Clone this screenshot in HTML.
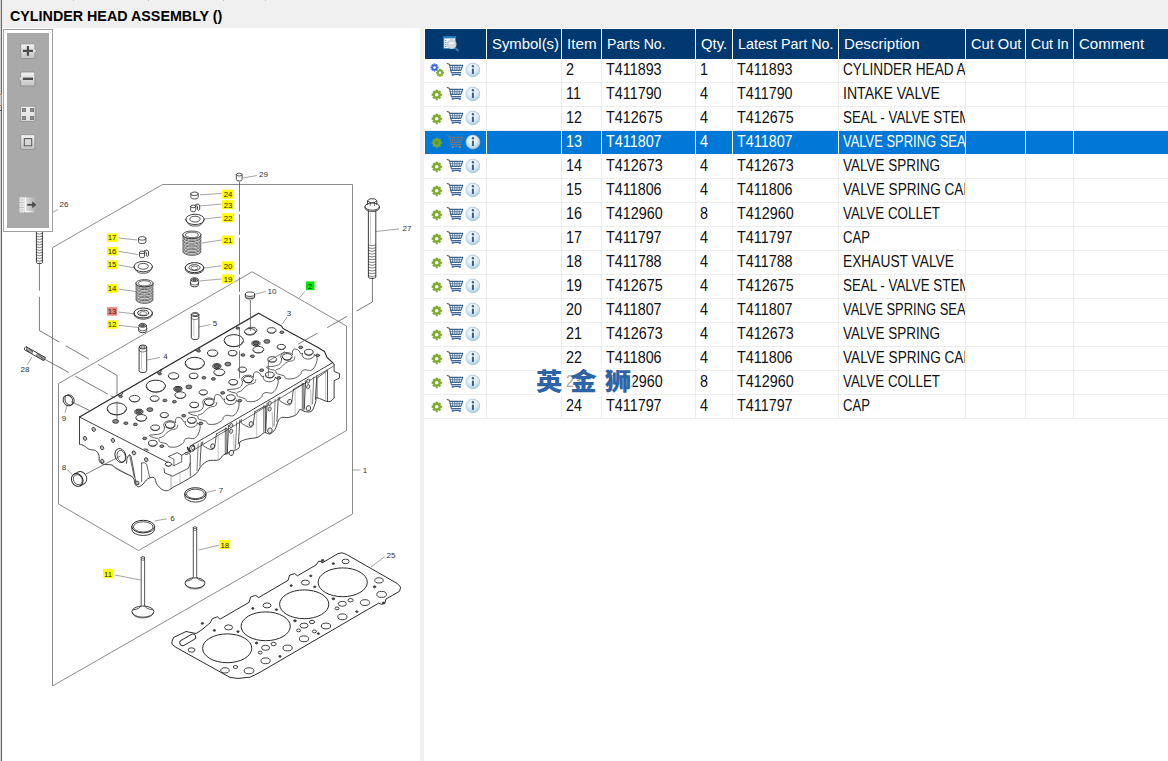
<!DOCTYPE html>
<html lang="en"><head><meta charset="utf-8"><title>CYLINDER HEAD ASSEMBLY</title>
<style>
html,body{margin:0;padding:0;}
body{width:1168px;height:761px;position:relative;overflow:hidden;background:#fff;font-family:"Liberation Sans","Noto Sans CJK SC",sans-serif;}
#topbar{position:absolute;left:0;top:0;width:1168px;height:28px;background:#f0f0f0;}
#title{position:absolute;left:10.3px;top:7px;font-size:15px;font-weight:bold;color:#000;white-space:nowrap;line-height:18px;transform:scaleX(0.953);transform-origin:0 50%;}
#ledge0{position:absolute;left:0;top:0;width:1px;height:761px;background:#d4d4d4;}
#ledge1{position:absolute;left:1px;top:0;width:1px;height:761px;background:#666;}
#lw{position:absolute;left:2px;top:28px;width:1px;height:733px;background:#fafafa;}
#orb{position:absolute;left:0;top:94px;width:1px;height:10px;border:1px solid #c98a2e;border-left:none;}
#tick{position:absolute;left:0;top:110px;width:2px;height:1px;background:#555;}
#split{position:absolute;left:420px;top:28px;width:4px;height:733px;background:#f0f0f0;}
#tool{position:absolute;left:3px;top:29px;width:48px;height:201px;border:1px solid #a0a0a0;background:#fff;}
#tool .in{position:absolute;left:3px;top:3px;width:42px;height:195px;background:#a9a9a9;}
#dg{position:absolute;left:0;top:0;}
#tbl{position:absolute;left:0;top:0;width:1168px;height:761px;font-size:15.8px;color:#111;}
.hd{position:absolute;background:#00396f;}
.hc{position:absolute;top:29px;height:30px;color:#fff;white-space:nowrap;overflow:hidden;}
.hc span{position:absolute;left:5px;top:6.2px;font-size:14.6px;line-height:18px;display:inline-block;transform-origin:0 50%;}
.hs{position:absolute;top:29px;width:1px;height:30px;background:#fff;}
.rw{position:absolute;left:425px;width:743px;height:23px;border-bottom:1px solid #ececec;}
.rw.sel{background:#0078d7;color:#fff;border-bottom:1px solid #f6f6f6;}
.rw .ic{position:absolute;left:0;top:0;}
.c{position:absolute;top:0;height:23px;overflow:hidden;white-space:nowrap;}
.c span{position:absolute;left:4.4px;top:1.9px;line-height:18px;display:inline-block;transform-origin:0 50%;}
.vs{position:absolute;top:59px;width:1px;height:360px;background:#ececec;}
.vsel{position:absolute;top:131px;width:1px;height:23px;background:#fff;}
.wmbg{position:absolute;left:534px;top:366px;width:99px;height:30px;background:rgba(255,255,255,0.62);}
.wm{position:absolute;left:535.5px;top:365px;font-family:"Noto Sans CJK SC","WenQuanYi Zen Hei",sans-serif;font-weight:900;font-size:24px;line-height:30px;color:#2f63a8;letter-spacing:7.2px;white-space:nowrap;transform:scaleX(1.1);transform-origin:0 50%;}

.tk{position:absolute;top:0;width:1px;height:1px;background:#bdbdbd;}
#tl{display:none;}

</style></head><body>
<svg width="0" height="0" style="position:absolute"><defs>
<radialGradient id="ig" cx="0.45" cy="0.35" r="0.7"><stop offset="0" stop-color="#ffffff"/><stop offset="0.55" stop-color="#dbe9f5"/><stop offset="1" stop-color="#9fc3e2"/></radialGradient>
<linearGradient id="bg" x1="0" y1="0" x2="0" y2="1"><stop offset="0" stop-color="#f2f2f2"/><stop offset="1" stop-color="#c4c4c4"/></linearGradient>
</defs></svg>
<div id="topbar"></div>
<div id="tl"></div><div class="tk" style="left:73px"></div><div class="tk" style="left:148px"></div><div class="tk" style="left:223px"></div><div class="tk" style="left:265px"></div>
<div id="title">CYLINDER HEAD ASSEMBLY ()</div>
<svg id="dg" width="420" height="761" viewBox="0 0 420 761" font-family="Liberation Sans, sans-serif">
<path d="M163.0,184.5 L352.5,184.5 L352.5,514.0 L52.5,686.0 L52.5,248.0Z" stroke="#6e6e6e" stroke-width="0.8" fill="none" stroke-linejoin="round" stroke-linecap="round" />
<path d="M252.5,272.0 L346.5,326.0 L346.5,430.5 L138.5,550.5 L58.5,504.0 L58.5,384.0Z" stroke="#6e6e6e" stroke-width="0.8" fill="none" stroke-linejoin="round" stroke-linecap="round" />
<path d="M79.5,417.0 L79.5,444.0 L84.5,446.0 L89.0,449.3 L95.6,450.6 L98.9,455.2 L99.6,461.8 L104.2,464.4 L112.0,465.0 L116.0,468.4 L124.5,473.0 L133.1,477.6 L135.1,484.1 L138.4,486.8 L143.0,484.1 L147.6,478.9 L154.1,477.6 L156.8,484.1 L162.0,489.4 L167.3,490.7 L171.0,488.8 L173.9,486.8 L179.1,484.1 L188.3,478.9 L196.2,473.6 L201.5,465.7 L208.2,460.8 L218.5,459.9 L223.6,454.8 L232.2,451.4 L239.0,447.9 L239.9,442.0 L245.9,439.4 L250.0,438.6 L257.9,437.2 L264.5,432.6 L269.7,434.0 L275.0,429.4 L278.3,420.8 L281.5,417.5 L288.1,417.5 L296.0,414.9 L299.9,409.6 L305.2,411.6 L311.8,411.0 L315.7,401.8 L317.0,397.8 L328.8,401.8 L334.1,397.8 L334.1,380.7 L339.4,378.1 L339.4,373.5 L334.1,371.5 L334.1,364.3 L332.7,362.6 L258.6,313.3Z" stroke="#2b2b2b" stroke-width="0" fill="#fff" stroke-linejoin="round" stroke-linecap="round" />
<path d="M79.5,417.0 L258.6,313.3" stroke="#2b2b2b" stroke-width="1.2" fill="none" stroke-linejoin="round" stroke-linecap="round" />
<path d="M258.6,313.3 L281.5,326.0 L283.0,328.4 L318.0,347.5 L324.5,351.5 L327.0,357.5 L332.7,362.6" stroke="#2b2b2b" stroke-width="1.1" fill="none" stroke-linejoin="round" stroke-linecap="round" />
<path d="M79.5,417.0 L168.0,462.6" stroke="#2b2b2b" stroke-width="0.9" fill="none" stroke-linejoin="round" stroke-linecap="round" />
<path d="M79.5,417.0 L79.5,444.0" stroke="#2b2b2b" stroke-width="0.9" fill="none" stroke-linejoin="round" stroke-linecap="round" />
<path d="M79.5,444.0 C80.3,444.3 82.9,445.1 84.5,446.0 C86.1,446.9 87.2,448.5 89.0,449.3 C90.8,450.1 93.9,449.6 95.6,450.6 C97.2,451.6 98.2,453.3 98.9,455.2 C99.6,457.1 98.7,460.3 99.6,461.8 C100.5,463.3 102.1,463.9 104.2,464.4 C106.3,464.9 110.0,464.3 112.0,465.0 C114.0,465.7 113.9,467.1 116.0,468.4 C118.1,469.7 121.7,471.5 124.5,473.0 C127.3,474.5 131.3,475.8 133.1,477.6 C134.9,479.5 134.2,482.6 135.1,484.1 C136.0,485.6 137.1,486.8 138.4,486.8 C139.7,486.8 141.5,485.4 143.0,484.1 C144.5,482.8 145.8,480.0 147.6,478.9 C149.4,477.8 152.6,476.7 154.1,477.6 C155.6,478.5 155.5,482.1 156.8,484.1 C158.1,486.1 160.2,488.3 162.0,489.4 C163.8,490.5 165.8,490.8 167.3,490.7 C168.8,490.6 170.4,489.1 171.0,488.8" stroke="#2b2b2b" stroke-width="0.9" fill="none" stroke-linejoin="round" stroke-linecap="round" />
<path d="M171.0,488.8 C171.5,488.5 172.6,487.6 173.9,486.8 C175.2,486.0 176.7,485.4 179.1,484.1 C181.5,482.8 185.5,480.6 188.3,478.9 C191.2,477.1 194.0,475.8 196.2,473.6 C198.4,471.4 199.5,467.8 201.5,465.7 C203.5,463.6 205.4,461.8 208.2,460.8 C211.0,459.8 215.9,460.9 218.5,459.9 C221.1,458.9 221.3,456.2 223.6,454.8 C225.9,453.4 229.6,452.5 232.2,451.4 C234.8,450.2 237.7,449.5 239.0,447.9 C240.3,446.3 238.8,443.4 239.9,442.0 C241.1,440.6 244.2,440.0 245.9,439.4 C247.6,438.8 248.0,439.0 250.0,438.6 C252.0,438.2 255.5,438.2 257.9,437.2 C260.3,436.2 262.5,433.1 264.5,432.6 C266.5,432.1 267.9,434.5 269.7,434.0 C271.4,433.5 273.6,431.6 275.0,429.4 C276.4,427.2 277.2,422.8 278.3,420.8 C279.4,418.8 279.9,418.1 281.5,417.5 C283.1,416.9 285.7,417.9 288.1,417.5 C290.5,417.1 294.0,416.2 296.0,414.9 C298.0,413.6 298.4,410.2 299.9,409.6 C301.4,409.1 303.2,411.4 305.2,411.6 C307.2,411.8 310.1,412.6 311.8,411.0 C313.6,409.4 314.8,404.0 315.7,401.8 C316.6,399.6 314.8,397.8 317.0,397.8 C319.2,397.8 325.9,401.8 328.8,401.8 C331.7,401.8 333.2,398.5 334.1,397.8" stroke="#2b2b2b" stroke-width="0.9" fill="none" stroke-linejoin="round" stroke-linecap="round" />
<path d="M334.1,397.8 L334.1,380.7 L339.4,378.1 L339.4,373.5 L334.1,371.5 L334.1,364.3" stroke="#2b2b2b" stroke-width="0.9" fill="none" stroke-linejoin="round" stroke-linecap="round" />
<path d="M118.0,395.0 q1.5,1.8 4,-0.4 q1.4,-1.6 0,-2.6" stroke="#2b2b2b" stroke-width="1.0" fill="none" stroke-linejoin="round" stroke-linecap="round" />
<path d="M156.6,372.6 q1.5,1.8 4,-0.4 q1.4,-1.6 0,-2.6" stroke="#2b2b2b" stroke-width="1.0" fill="none" stroke-linejoin="round" stroke-linecap="round" />
<path d="M195.2,350.2 q1.5,1.8 4,-0.4 q1.4,-1.6 0,-2.6" stroke="#2b2b2b" stroke-width="1.0" fill="none" stroke-linejoin="round" stroke-linecap="round" />
<path d="M334.1,364.3 L332.7,362.6" stroke="#2b2b2b" stroke-width="0.9" fill="none" stroke-linejoin="round" stroke-linecap="round" />
<path d="M332.7,362.6 L190.2,446.2" stroke="#2b2b2b" stroke-width="0.9" fill="none" stroke-linejoin="round" stroke-linecap="round" />
<path d="M333.4,366.2 L193.4,450.2" stroke="#2b2b2b" stroke-width="0.7" fill="none" stroke-linejoin="round" stroke-linecap="round" />
<ellipse cx="192.2" cy="448.2" rx="2.5" ry="3.0" stroke="#2b2b2b" stroke-width="0.9" fill="#fff" transform="rotate(25 192.2 448.2)"/>
<ellipse cx="192.8" cy="448.0" rx="1.3" ry="1.7" stroke="#2b2b2b" stroke-width="0.6" fill="none" transform="rotate(25 192.8 448)"/>
<path d="M187.6,447.6 q0.6,3.4 2.8,4.4" stroke="#2b2b2b" stroke-width="1.6" fill="none" stroke-linejoin="round" stroke-linecap="round" />
<path d="M168.6,456.5 L177.1,452.6 L181.7,455.2 L187.7,451.9 L190.3,455.2 L190.3,463.1 L188.3,468.4 L172.5,476.2 L164.7,473.0 L164.0,468.4" stroke="#2b2b2b" stroke-width="0.8" fill="none" stroke-linejoin="round" stroke-linecap="round" />
<path d="M168.6,456.5 L173.9,459.2 L173.9,465.7 L181.7,461.8 L181.7,455.2" stroke="#2b2b2b" stroke-width="0.7" fill="none" stroke-linejoin="round" stroke-linecap="round" />
<path d="M173.9,465.7 L168.0,462.6" stroke="#2b2b2b" stroke-width="0.6" fill="none" stroke-linejoin="round" stroke-linecap="round" />
<path d="M171.0,474.6 L171.0,488.0" stroke="#777" stroke-width="0.6" fill="none" stroke-linejoin="round" stroke-linecap="round" />
<path d="M190.3,463.1 L190.3,476.0" stroke="#2b2b2b" stroke-width="0.7" fill="none" stroke-linejoin="round" stroke-linecap="round" />
<path d="M180.0,472.6 L180.0,483.0" stroke="#888" stroke-width="0.5" fill="none" stroke-linejoin="round" stroke-linecap="round" />
<ellipse cx="186.3" cy="453.4" rx="1.6" ry="1.1" stroke="#2b2b2b" stroke-width="0.7" fill="#ccc" />
<ellipse cx="120.4" cy="455.6" rx="5.3" ry="7.2" stroke="#2b2b2b" stroke-width="0.9" fill="none" transform="rotate(-18 120.4 455.6)"/>
<ellipse cx="121.3" cy="456.2" rx="4.0" ry="5.9" stroke="#2b2b2b" stroke-width="0.7" fill="none" transform="rotate(-18 121.3 456.2)"/>
<path d="M126.5,463.4 q0.2,-5.6 1.6,-7.4 q1.6,-2.6 3,0.4 l4.6,25" stroke="#2b2b2b" stroke-width="0.8" fill="none" stroke-linejoin="round" stroke-linecap="round" />
<path d="M129.6,455 l4.6,22 M141.6,463.1 V481.5 M141.6,463.1 q3,-1.6 5,1 l3,13" stroke="#2b2b2b" stroke-width="0.7" fill="none" stroke-linejoin="round" stroke-linecap="round" />
<path d="M112,465.6 l21,11.4" stroke="#666" stroke-width="0.6" fill="none" stroke-linejoin="round" stroke-linecap="round" />
<ellipse cx="93.7" cy="429.4" rx="1.6" ry="2.1" stroke="#2b2b2b" stroke-width="0.8" fill="#bbb" transform="rotate(-25 93.7 429.4)"/>
<ellipse cx="85.0" cy="438.4" rx="1.6" ry="2.1" stroke="#2b2b2b" stroke-width="0.8" fill="#bbb" transform="rotate(-25 85 438.4)"/>
<ellipse cx="112.9" cy="440.4" rx="1.6" ry="2.1" stroke="#2b2b2b" stroke-width="0.8" fill="#bbb" transform="rotate(-25 112.9 440.4)"/>
<ellipse cx="102.0" cy="447.8" rx="1.6" ry="2.1" stroke="#2b2b2b" stroke-width="0.8" fill="#bbb" transform="rotate(-25 102 447.8)"/>
<ellipse cx="102.3" cy="461.2" rx="1.6" ry="2.1" stroke="#2b2b2b" stroke-width="0.8" fill="#bbb" transform="rotate(-25 102.3 461.2)"/>
<ellipse cx="133.9" cy="452.9" rx="1.6" ry="2.1" stroke="#2b2b2b" stroke-width="0.8" fill="#bbb" transform="rotate(-25 133.9 452.9)"/>
<ellipse cx="146.2" cy="459.7" rx="1.6" ry="2.1" stroke="#2b2b2b" stroke-width="0.8" fill="#bbb" transform="rotate(-25 146.2 459.7)"/>
<ellipse cx="137.3" cy="483.0" rx="1.6" ry="2.1" stroke="#2b2b2b" stroke-width="0.8" fill="#bbb" transform="rotate(-25 137.3 483)"/>
<path d="M201.3,442.4 L199.9,466.1" stroke="#2b2b2b" stroke-width="0.8" fill="none" stroke-linejoin="round" stroke-linecap="round" />
<path d="M198.2,444.0 L197.0,470.6" stroke="#2b2b2b" stroke-width="0.6" fill="none" stroke-linejoin="round" stroke-linecap="round" />
<path d="M202.8,441.8 C202.8,442.4 202.3,444.3 202.8,445.2 C203.3,446.1 204.9,446.7 206.0,447.4 C207.1,448.1 208.5,448.9 209.6,449.2 C210.7,449.5 211.8,449.7 212.6,449.4 C213.4,449.1 214.2,448.2 214.6,447.2 C215.0,446.2 214.9,445.6 215.2,443.4 C215.5,441.2 216.2,435.6 216.4,434.0" stroke="#2b2b2b" stroke-width="0.8" fill="none" stroke-linejoin="round" stroke-linecap="round" />
<ellipse cx="212.6" cy="446.2" rx="1.9" ry="2.4" stroke="#2b2b2b" stroke-width="0.8" fill="#eee" transform="rotate(18 212.6 446.2)"/>
<path d="M216.4,434.0 L226.9,428.0 L226.9,454.4" stroke="#2b2b2b" stroke-width="0.8" fill="none" stroke-linejoin="round" stroke-linecap="round" />
<path d="M218.2,434.8 L218.2,458.8" stroke="#888" stroke-width="0.5" fill="none" stroke-linejoin="round" stroke-linecap="round" />
<path d="M228.6,425.4 L227.3,453.0" stroke="#2b2b2b" stroke-width="0.8" fill="none" stroke-linejoin="round" stroke-linecap="round" />
<path d="M225.3,428.0 L225.3,454.3" stroke="#2b2b2b" stroke-width="0.7" fill="none" stroke-linejoin="round" stroke-linecap="round" />
<ellipse cx="231.2" cy="425.6" rx="1.5" ry="2.2" stroke="#2b2b2b" stroke-width="0.7" fill="#ddd" transform="rotate(18 231.2 425.6)"/>
<ellipse cx="231.2" cy="431.3" rx="1.5" ry="2.2" stroke="#2b2b2b" stroke-width="0.7" fill="#ddd" transform="rotate(18 231.2 431.3)"/>
<ellipse cx="231.4" cy="452.9" rx="2.2" ry="2.7" stroke="#2b2b2b" stroke-width="0.8" fill="#eee" transform="rotate(18 231.4 452.9)"/>
<path d="M233.7,434.3 L234.1,449.9" stroke="#777" stroke-width="0.5" fill="none" stroke-linejoin="round" stroke-linecap="round" />
<path d="M239.8,420.1 L238.4,443.8" stroke="#2b2b2b" stroke-width="0.8" fill="none" stroke-linejoin="round" stroke-linecap="round" />
<path d="M236.7,421.7 L235.5,448.3" stroke="#2b2b2b" stroke-width="0.6" fill="none" stroke-linejoin="round" stroke-linecap="round" />
<path d="M241.3,419.5 C241.3,420.1 240.8,422.0 241.3,422.9 C241.8,423.8 243.4,424.4 244.5,425.1 C245.6,425.8 247.0,426.6 248.1,426.9 C249.2,427.2 250.3,427.4 251.1,427.1 C251.9,426.8 252.7,425.9 253.1,424.9 C253.5,423.9 253.4,423.3 253.7,421.1 C254.0,418.9 254.7,413.3 254.9,411.7" stroke="#2b2b2b" stroke-width="0.8" fill="none" stroke-linejoin="round" stroke-linecap="round" />
<ellipse cx="251.1" cy="423.9" rx="1.9" ry="2.4" stroke="#2b2b2b" stroke-width="0.8" fill="#eee" transform="rotate(18 251.1 423.9)"/>
<path d="M254.9,411.7 L265.4,405.7 L265.4,432.1" stroke="#2b2b2b" stroke-width="0.8" fill="none" stroke-linejoin="round" stroke-linecap="round" />
<path d="M256.7,412.5 L256.7,436.5" stroke="#888" stroke-width="0.5" fill="none" stroke-linejoin="round" stroke-linecap="round" />
<path d="M267.1,403.1 L265.8,430.7" stroke="#2b2b2b" stroke-width="0.8" fill="none" stroke-linejoin="round" stroke-linecap="round" />
<path d="M263.8,405.7 L263.8,432.0" stroke="#2b2b2b" stroke-width="0.7" fill="none" stroke-linejoin="round" stroke-linecap="round" />
<ellipse cx="269.7" cy="403.3" rx="1.5" ry="2.2" stroke="#2b2b2b" stroke-width="0.7" fill="#ddd" transform="rotate(18 269.7 403.3)"/>
<ellipse cx="269.7" cy="409.0" rx="1.5" ry="2.2" stroke="#2b2b2b" stroke-width="0.7" fill="#ddd" transform="rotate(18 269.7 409.0)"/>
<ellipse cx="269.9" cy="430.6" rx="2.2" ry="2.7" stroke="#2b2b2b" stroke-width="0.8" fill="#eee" transform="rotate(18 269.9 430.6)"/>
<path d="M272.2,412.0 L272.6,427.6" stroke="#777" stroke-width="0.5" fill="none" stroke-linejoin="round" stroke-linecap="round" />
<path d="M278.3,397.8 L276.9,421.5" stroke="#2b2b2b" stroke-width="0.8" fill="none" stroke-linejoin="round" stroke-linecap="round" />
<path d="M275.2,399.4 L274.0,426.0" stroke="#2b2b2b" stroke-width="0.6" fill="none" stroke-linejoin="round" stroke-linecap="round" />
<path d="M279.8,397.2 C279.8,397.8 279.3,399.7 279.8,400.6 C280.3,401.5 281.9,402.1 283.0,402.8 C284.1,403.5 285.5,404.3 286.6,404.6 C287.7,404.9 288.8,405.1 289.6,404.8 C290.4,404.5 291.2,403.6 291.6,402.6 C292.0,401.6 291.9,401.0 292.2,398.8 C292.5,396.6 293.2,391.0 293.4,389.4" stroke="#2b2b2b" stroke-width="0.8" fill="none" stroke-linejoin="round" stroke-linecap="round" />
<ellipse cx="289.6" cy="401.6" rx="1.9" ry="2.4" stroke="#2b2b2b" stroke-width="0.8" fill="#eee" transform="rotate(18 289.6 401.6)"/>
<path d="M293.4,389.4 L303.9,383.4 L303.9,409.8" stroke="#2b2b2b" stroke-width="0.8" fill="none" stroke-linejoin="round" stroke-linecap="round" />
<path d="M295.2,390.2 L295.2,414.2" stroke="#888" stroke-width="0.5" fill="none" stroke-linejoin="round" stroke-linecap="round" />
<path d="M305.6,380.8 L304.3,408.4" stroke="#2b2b2b" stroke-width="0.8" fill="none" stroke-linejoin="round" stroke-linecap="round" />
<path d="M302.3,383.4 L302.3,409.7" stroke="#2b2b2b" stroke-width="0.7" fill="none" stroke-linejoin="round" stroke-linecap="round" />
<ellipse cx="308.2" cy="381.0" rx="1.5" ry="2.2" stroke="#2b2b2b" stroke-width="0.7" fill="#ddd" transform="rotate(18 308.2 381.0)"/>
<ellipse cx="308.2" cy="386.7" rx="1.5" ry="2.2" stroke="#2b2b2b" stroke-width="0.7" fill="#ddd" transform="rotate(18 308.2 386.7)"/>
<ellipse cx="308.4" cy="408.3" rx="2.2" ry="2.7" stroke="#2b2b2b" stroke-width="0.8" fill="#eee" transform="rotate(18 308.4 408.3)"/>
<path d="M310.7,389.7 L311.1,405.3" stroke="#777" stroke-width="0.5" fill="none" stroke-linejoin="round" stroke-linecap="round" />
<path d="M316.8,375.5 L315.4,399.2" stroke="#2b2b2b" stroke-width="0.8" fill="none" stroke-linejoin="round" stroke-linecap="round" />
<path d="M313.7,377.1 L312.5,403.7" stroke="#2b2b2b" stroke-width="0.6" fill="none" stroke-linejoin="round" stroke-linecap="round" />
<path d="M317.0,397.8 L317.0,378.1 L327.5,370.4 L327.5,401.2" stroke="#2b2b2b" stroke-width="0.8" fill="none" stroke-linejoin="round" stroke-linecap="round" />
<path d="M325.6,371.8 L325.6,399.8" stroke="#888" stroke-width="0.5" fill="none" stroke-linejoin="round" stroke-linecap="round" />
<clipPath id="tf"><path d="M80.5,417.0 L258.6,314.2 L331.6,362.6 L168.0,461.6Z"/></clipPath>
<g clip-path="url(#tf)">
<ellipse cx="115.6" cy="421.4" rx="3.0" ry="1.9" stroke="#2b2b2b" stroke-width="0.8" fill="#8a8a8a" />
<ellipse cx="125.9" cy="423.2" rx="2.0" ry="1.3" stroke="#2b2b2b" stroke-width="0.8" fill="#8a8a8a" />
<ellipse cx="135.4" cy="424.4" rx="2.0" ry="1.3" stroke="#2b2b2b" stroke-width="0.8" fill="#8a8a8a" />
<ellipse cx="144.7" cy="438.4" rx="2.0" ry="1.3" stroke="#2b2b2b" stroke-width="0.8" fill="#8a8a8a" />
<ellipse cx="152.8" cy="443.2" rx="4.4" ry="2.9" stroke="#2b2b2b" stroke-width="0.9" fill="none" />
<path d="M149.3,444.1 a3.5,2.2 0 0 0 7.0,0" stroke="#2b2b2b" stroke-width="0.7" fill="none" stroke-linejoin="round" stroke-linecap="round" />
<ellipse cx="161.8" cy="446.2" rx="2.0" ry="1.3" stroke="#2b2b2b" stroke-width="0.8" fill="#8a8a8a" />
<ellipse cx="116.8" cy="408.8" rx="9.7" ry="6.0" stroke="#2b2b2b" stroke-width="1.0" fill="none" />
<path d="M108.3,410.0 a8.5,5.0 0 0 0 17.0,0" stroke="#2b2b2b" stroke-width="0.6" fill="none" stroke-linejoin="round" stroke-linecap="round" />
<ellipse cx="134.6" cy="398.6" rx="5.3" ry="3.2" stroke="#2b2b2b" stroke-width="0.9" fill="none" />
<path d="M130.1,399.4 a4.5,2.6 0 0 0 9.0,0" stroke="#2b2b2b" stroke-width="0.55" fill="none" stroke-linejoin="round" stroke-linecap="round" />
<ellipse cx="154.6" cy="398.6" rx="4.4" ry="2.7" stroke="#2b2b2b" stroke-width="0.9" fill="none" />
<path d="M151.0,399.4 a3.6,2.1 0 0 0 7.2,0" stroke="#2b2b2b" stroke-width="0.55" fill="none" stroke-linejoin="round" stroke-linecap="round" />
<ellipse cx="164.9" cy="400.5" rx="2.0" ry="1.3" stroke="#2b2b2b" stroke-width="0.8" fill="#8a8a8a" />
<ellipse cx="174.4" cy="401.7" rx="2.0" ry="1.3" stroke="#2b2b2b" stroke-width="0.8" fill="#8a8a8a" />
<ellipse cx="120.7" cy="396.5" rx="1.8" ry="1.1" stroke="#2b2b2b" stroke-width="0.8" fill="#8a8a8a" />
<ellipse cx="138.9" cy="411.7" rx="4.1" ry="2.5" stroke="#2b2b2b" stroke-width="1.0" fill="#c8c8c8" />
<ellipse cx="138.9" cy="411.5" rx="2.8" ry="1.6" stroke="#2b2b2b" stroke-width="0.8" fill="#666" />
<ellipse cx="149.9" cy="409.6" rx="3.0" ry="1.9" stroke="#2b2b2b" stroke-width="0.8" fill="#8a8a8a" />
<ellipse cx="141.3" cy="417.8" rx="5.5" ry="3.3" stroke="#2b2b2b" stroke-width="0.9" fill="none" />
<path d="M136.8,418.7 a4.5,2.5 0 0 0 9.0,0" stroke="#2b2b2b" stroke-width="0.55" fill="none" stroke-linejoin="round" stroke-linecap="round" />
<ellipse cx="164.3" cy="415.1" rx="4.1" ry="2.5" stroke="#2b2b2b" stroke-width="0.9" fill="none" />
<path d="M161.0,415.9 a3.3,1.9 0 0 0 6.6,0" stroke="#2b2b2b" stroke-width="0.55" fill="none" stroke-linejoin="round" stroke-linecap="round" />
<ellipse cx="155.2" cy="427.7" rx="4.4" ry="2.7" stroke="#2b2b2b" stroke-width="0.9" fill="none" />
<path d="M151.6,428.5 a3.6,2.1 0 0 0 7.2,0" stroke="#2b2b2b" stroke-width="0.55" fill="none" stroke-linejoin="round" stroke-linecap="round" />
<ellipse cx="170.2" cy="425.0" rx="4.9" ry="3.2" stroke="#2b2b2b" stroke-width="0.9" fill="none" />
<path d="M166.2,426.0 a4.0,2.5 0 0 0 8.0,0" stroke="#2b2b2b" stroke-width="0.8" fill="none" stroke-linejoin="round" stroke-linecap="round" />
<ellipse cx="183.7" cy="415.7" rx="2.0" ry="1.3" stroke="#2b2b2b" stroke-width="0.8" fill="#8a8a8a" />
<ellipse cx="191.8" cy="420.4" rx="4.4" ry="2.9" stroke="#2b2b2b" stroke-width="0.9" fill="none" />
<path d="M188.3,421.3 a3.5,2.2 0 0 0 7.0,0" stroke="#2b2b2b" stroke-width="0.7" fill="none" stroke-linejoin="round" stroke-linecap="round" />
<ellipse cx="200.8" cy="423.4" rx="2.0" ry="1.3" stroke="#2b2b2b" stroke-width="0.8" fill="#8a8a8a" />
<ellipse cx="155.8" cy="386.1" rx="9.7" ry="6.0" stroke="#2b2b2b" stroke-width="1.0" fill="none" />
<path d="M147.3,387.2 a8.5,5.0 0 0 0 17.0,0" stroke="#2b2b2b" stroke-width="0.6" fill="none" stroke-linejoin="round" stroke-linecap="round" />
<ellipse cx="173.6" cy="375.9" rx="5.3" ry="3.2" stroke="#2b2b2b" stroke-width="0.9" fill="none" />
<path d="M169.1,376.7 a4.5,2.6 0 0 0 9.0,0" stroke="#2b2b2b" stroke-width="0.55" fill="none" stroke-linejoin="round" stroke-linecap="round" />
<ellipse cx="193.6" cy="375.9" rx="4.4" ry="2.7" stroke="#2b2b2b" stroke-width="0.9" fill="none" />
<path d="M190.0,376.7 a3.6,2.1 0 0 0 7.2,0" stroke="#2b2b2b" stroke-width="0.55" fill="none" stroke-linejoin="round" stroke-linecap="round" />
<ellipse cx="203.9" cy="377.8" rx="2.0" ry="1.3" stroke="#2b2b2b" stroke-width="0.8" fill="#8a8a8a" />
<ellipse cx="213.4" cy="378.9" rx="2.0" ry="1.3" stroke="#2b2b2b" stroke-width="0.8" fill="#8a8a8a" />
<ellipse cx="159.7" cy="373.8" rx="1.8" ry="1.1" stroke="#2b2b2b" stroke-width="0.8" fill="#8a8a8a" />
<ellipse cx="177.9" cy="388.9" rx="4.1" ry="2.5" stroke="#2b2b2b" stroke-width="1.0" fill="#c8c8c8" />
<ellipse cx="177.9" cy="388.8" rx="2.8" ry="1.6" stroke="#2b2b2b" stroke-width="0.8" fill="#666" />
<ellipse cx="188.9" cy="386.9" rx="3.0" ry="1.9" stroke="#2b2b2b" stroke-width="0.8" fill="#8a8a8a" />
<ellipse cx="180.3" cy="395.1" rx="5.5" ry="3.3" stroke="#2b2b2b" stroke-width="0.9" fill="none" />
<path d="M175.8,395.9 a4.5,2.5 0 0 0 9.0,0" stroke="#2b2b2b" stroke-width="0.55" fill="none" stroke-linejoin="round" stroke-linecap="round" />
<ellipse cx="203.3" cy="392.4" rx="4.1" ry="2.5" stroke="#2b2b2b" stroke-width="0.9" fill="none" />
<path d="M200.0,393.2 a3.3,1.9 0 0 0 6.6,0" stroke="#2b2b2b" stroke-width="0.55" fill="none" stroke-linejoin="round" stroke-linecap="round" />
<ellipse cx="194.2" cy="404.9" rx="4.4" ry="2.7" stroke="#2b2b2b" stroke-width="0.9" fill="none" />
<path d="M190.6,405.8 a3.6,2.1 0 0 0 7.2,0" stroke="#2b2b2b" stroke-width="0.55" fill="none" stroke-linejoin="round" stroke-linecap="round" />
<ellipse cx="209.2" cy="402.2" rx="4.9" ry="3.2" stroke="#2b2b2b" stroke-width="0.9" fill="none" />
<path d="M205.2,403.2 a4.0,2.5 0 0 0 8.0,0" stroke="#2b2b2b" stroke-width="0.8" fill="none" stroke-linejoin="round" stroke-linecap="round" />
<ellipse cx="222.7" cy="392.9" rx="2.0" ry="1.3" stroke="#2b2b2b" stroke-width="0.8" fill="#8a8a8a" />
<ellipse cx="230.8" cy="397.7" rx="4.4" ry="2.9" stroke="#2b2b2b" stroke-width="0.9" fill="none" />
<path d="M227.3,398.6 a3.5,2.2 0 0 0 7.0,0" stroke="#2b2b2b" stroke-width="0.7" fill="none" stroke-linejoin="round" stroke-linecap="round" />
<ellipse cx="239.8" cy="400.7" rx="2.0" ry="1.3" stroke="#2b2b2b" stroke-width="0.8" fill="#8a8a8a" />
<ellipse cx="194.8" cy="363.3" rx="9.7" ry="6.0" stroke="#2b2b2b" stroke-width="1.0" fill="none" />
<path d="M186.3,364.5 a8.5,5.0 0 0 0 17.0,0" stroke="#2b2b2b" stroke-width="0.6" fill="none" stroke-linejoin="round" stroke-linecap="round" />
<ellipse cx="212.6" cy="353.1" rx="5.3" ry="3.2" stroke="#2b2b2b" stroke-width="0.9" fill="none" />
<path d="M208.1,353.9 a4.5,2.6 0 0 0 9.0,0" stroke="#2b2b2b" stroke-width="0.55" fill="none" stroke-linejoin="round" stroke-linecap="round" />
<ellipse cx="232.6" cy="353.1" rx="4.4" ry="2.7" stroke="#2b2b2b" stroke-width="0.9" fill="none" />
<path d="M229.0,353.9 a3.6,2.1 0 0 0 7.2,0" stroke="#2b2b2b" stroke-width="0.55" fill="none" stroke-linejoin="round" stroke-linecap="round" />
<ellipse cx="242.9" cy="355.0" rx="2.0" ry="1.3" stroke="#2b2b2b" stroke-width="0.8" fill="#8a8a8a" />
<ellipse cx="252.4" cy="356.2" rx="2.0" ry="1.3" stroke="#2b2b2b" stroke-width="0.8" fill="#8a8a8a" />
<ellipse cx="198.7" cy="351.0" rx="1.8" ry="1.1" stroke="#2b2b2b" stroke-width="0.8" fill="#8a8a8a" />
<ellipse cx="216.9" cy="366.2" rx="4.1" ry="2.5" stroke="#2b2b2b" stroke-width="1.0" fill="#c8c8c8" />
<ellipse cx="216.9" cy="366.0" rx="2.8" ry="1.6" stroke="#2b2b2b" stroke-width="0.8" fill="#666" />
<ellipse cx="227.9" cy="364.1" rx="3.0" ry="1.9" stroke="#2b2b2b" stroke-width="0.8" fill="#8a8a8a" />
<ellipse cx="219.3" cy="372.3" rx="5.5" ry="3.3" stroke="#2b2b2b" stroke-width="0.9" fill="none" />
<path d="M214.8,373.2 a4.5,2.5 0 0 0 9.0,0" stroke="#2b2b2b" stroke-width="0.55" fill="none" stroke-linejoin="round" stroke-linecap="round" />
<ellipse cx="242.3" cy="369.6" rx="4.1" ry="2.5" stroke="#2b2b2b" stroke-width="0.9" fill="none" />
<path d="M239.0,370.4 a3.3,1.9 0 0 0 6.6,0" stroke="#2b2b2b" stroke-width="0.55" fill="none" stroke-linejoin="round" stroke-linecap="round" />
<ellipse cx="233.2" cy="382.2" rx="4.4" ry="2.7" stroke="#2b2b2b" stroke-width="0.9" fill="none" />
<path d="M229.6,383.0 a3.6,2.1 0 0 0 7.2,0" stroke="#2b2b2b" stroke-width="0.55" fill="none" stroke-linejoin="round" stroke-linecap="round" />
<ellipse cx="248.2" cy="379.5" rx="4.9" ry="3.2" stroke="#2b2b2b" stroke-width="0.9" fill="none" />
<path d="M244.2,380.5 a4.0,2.5 0 0 0 8.0,0" stroke="#2b2b2b" stroke-width="0.8" fill="none" stroke-linejoin="round" stroke-linecap="round" />
<ellipse cx="261.7" cy="370.2" rx="2.0" ry="1.3" stroke="#2b2b2b" stroke-width="0.8" fill="#8a8a8a" />
<ellipse cx="269.8" cy="374.9" rx="4.4" ry="2.9" stroke="#2b2b2b" stroke-width="0.9" fill="none" />
<path d="M266.3,375.8 a3.5,2.2 0 0 0 7.0,0" stroke="#2b2b2b" stroke-width="0.7" fill="none" stroke-linejoin="round" stroke-linecap="round" />
<ellipse cx="278.8" cy="377.9" rx="2.0" ry="1.3" stroke="#2b2b2b" stroke-width="0.8" fill="#8a8a8a" />
<ellipse cx="233.8" cy="340.6" rx="9.7" ry="6.0" stroke="#2b2b2b" stroke-width="1.0" fill="none" />
<path d="M225.3,341.8 a8.5,5.0 0 0 0 17.0,0" stroke="#2b2b2b" stroke-width="0.6" fill="none" stroke-linejoin="round" stroke-linecap="round" />
<ellipse cx="251.6" cy="330.4" rx="5.3" ry="3.2" stroke="#2b2b2b" stroke-width="0.9" fill="none" />
<path d="M247.1,331.2 a4.5,2.6 0 0 0 9.0,0" stroke="#2b2b2b" stroke-width="0.55" fill="none" stroke-linejoin="round" stroke-linecap="round" />
<ellipse cx="271.6" cy="330.4" rx="4.4" ry="2.7" stroke="#2b2b2b" stroke-width="0.9" fill="none" />
<path d="M268.0,331.2 a3.6,2.1 0 0 0 7.2,0" stroke="#2b2b2b" stroke-width="0.55" fill="none" stroke-linejoin="round" stroke-linecap="round" />
<ellipse cx="281.9" cy="332.2" rx="2.0" ry="1.3" stroke="#2b2b2b" stroke-width="0.8" fill="#8a8a8a" />
<ellipse cx="291.4" cy="333.4" rx="2.0" ry="1.3" stroke="#2b2b2b" stroke-width="0.8" fill="#8a8a8a" />
<ellipse cx="237.7" cy="328.2" rx="1.8" ry="1.1" stroke="#2b2b2b" stroke-width="0.8" fill="#8a8a8a" />
<ellipse cx="255.9" cy="343.4" rx="4.1" ry="2.5" stroke="#2b2b2b" stroke-width="1.0" fill="#c8c8c8" />
<ellipse cx="255.9" cy="343.2" rx="2.8" ry="1.6" stroke="#2b2b2b" stroke-width="0.8" fill="#666" />
<ellipse cx="266.9" cy="341.4" rx="3.0" ry="1.9" stroke="#2b2b2b" stroke-width="0.8" fill="#8a8a8a" />
<ellipse cx="258.3" cy="349.6" rx="5.5" ry="3.3" stroke="#2b2b2b" stroke-width="0.9" fill="none" />
<path d="M253.8,350.4 a4.5,2.5 0 0 0 9.0,0" stroke="#2b2b2b" stroke-width="0.55" fill="none" stroke-linejoin="round" stroke-linecap="round" />
<ellipse cx="281.3" cy="346.9" rx="4.1" ry="2.5" stroke="#2b2b2b" stroke-width="0.9" fill="none" />
<path d="M278.0,347.7 a3.3,1.9 0 0 0 6.6,0" stroke="#2b2b2b" stroke-width="0.55" fill="none" stroke-linejoin="round" stroke-linecap="round" />
<ellipse cx="272.2" cy="359.4" rx="4.4" ry="2.7" stroke="#2b2b2b" stroke-width="0.9" fill="none" />
<path d="M268.6,360.2 a3.6,2.1 0 0 0 7.2,0" stroke="#2b2b2b" stroke-width="0.55" fill="none" stroke-linejoin="round" stroke-linecap="round" />
<ellipse cx="287.2" cy="356.8" rx="4.9" ry="3.2" stroke="#2b2b2b" stroke-width="0.9" fill="none" />
<path d="M283.2,357.8 a4.0,2.5 0 0 0 8.0,0" stroke="#2b2b2b" stroke-width="0.8" fill="none" stroke-linejoin="round" stroke-linecap="round" />
<ellipse cx="300.7" cy="347.4" rx="2.0" ry="1.3" stroke="#2b2b2b" stroke-width="0.8" fill="#8a8a8a" />
<ellipse cx="308.8" cy="352.2" rx="4.4" ry="2.9" stroke="#2b2b2b" stroke-width="0.9" fill="none" />
<path d="M305.3,353.1 a3.5,2.2 0 0 0 7.0,0" stroke="#2b2b2b" stroke-width="0.7" fill="none" stroke-linejoin="round" stroke-linecap="round" />
<ellipse cx="317.8" cy="355.2" rx="2.0" ry="1.3" stroke="#2b2b2b" stroke-width="0.8" fill="#8a8a8a" />
<ellipse cx="145.3" cy="450.7" rx="2.8" ry="1.8" stroke="#2b2b2b" stroke-width="0.8" fill="#8a8a8a" />
<ellipse cx="167.9" cy="463.4" rx="3.3" ry="2.1" stroke="#2b2b2b" stroke-width="0.9" fill="none" />
<path d="M165.5,464.3 a2.4,1.4 0 0 0 4.8,0" stroke="#2b2b2b" stroke-width="0.7" fill="none" stroke-linejoin="round" stroke-linecap="round" />
<path d="M164.6,427.2 A6.2,4.1 0 1 1 175.4,422.6" stroke="#2b2b2b" stroke-width="0.75" fill="none" stroke-linejoin="round" stroke-linecap="round" />
<path d="M185.4,421.8 A6.2,4.1 0 1 0 197.4,423.0" stroke="#2b2b2b" stroke-width="0.75" fill="none" stroke-linejoin="round" stroke-linecap="round" />
<path d="M175.4,422.6 C175.5,421.9 175.4,419.3 176.0,418.4 C176.6,417.5 178.0,417.2 179.0,417.3 C180.0,417.4 181.2,418.2 182.0,419.0 C182.8,419.8 183.0,421.3 183.6,421.8 C184.2,422.3 185.1,421.8 185.4,421.8" stroke="#2b2b2b" stroke-width="0.75" fill="none" stroke-linejoin="round" stroke-linecap="round" />
<path d="M197.4,423.0 C197.8,423.4 199.4,424.2 199.8,425.2 C200.2,426.2 200.3,427.3 200.0,428.9 C199.7,430.5 198.8,433.3 197.8,434.9 C196.8,436.5 195.4,438.1 193.8,438.6 C192.1,439.1 189.4,437.8 187.9,438.0 C186.3,438.2 185.2,439.0 184.5,439.8 C183.8,440.6 184.7,441.6 183.5,442.7 C182.3,443.8 179.5,446.0 177.1,446.7 C174.7,447.4 170.8,447.3 169.2,446.9 C167.5,446.5 168.3,444.9 167.2,444.2 C166.0,443.5 163.6,443.1 162.3,442.7 C161.0,442.3 160.0,442.2 159.4,441.6 C158.7,441.0 159.4,439.5 158.4,438.8 C157.4,438.1 155.0,438.2 153.5,437.6 C152.0,437.0 148.7,435.9 149.5,435.3 C150.3,434.7 156.1,434.8 158.4,434.2 C160.7,433.6 162.3,432.8 163.3,431.6 C164.3,430.4 164.4,427.9 164.6,427.2" stroke="#2b2b2b" stroke-width="0.75" fill="none" stroke-linejoin="round" stroke-linecap="round" />
<path d="M159.4,437.8 C160.0,437.6 162.0,437.2 163.3,436.3 C164.6,435.4 165.9,433.5 167.2,432.4 C168.5,431.3 169.7,430.5 171.2,429.9 C172.7,429.3 175.3,429.4 176.4,428.6 C177.5,427.8 177.6,425.8 177.8,425.2" stroke="#2b2b2b" stroke-width="0.7" fill="none" stroke-linejoin="round" stroke-linecap="round" />
<path d="M203.6,404.4 A6.2,4.1 0 1 1 214.4,399.9" stroke="#2b2b2b" stroke-width="0.75" fill="none" stroke-linejoin="round" stroke-linecap="round" />
<path d="M224.4,399.1 A6.2,4.1 0 1 0 236.4,400.2" stroke="#2b2b2b" stroke-width="0.75" fill="none" stroke-linejoin="round" stroke-linecap="round" />
<path d="M214.4,399.9 C214.5,399.2 214.4,396.5 215.0,395.6 C215.6,394.8 217.0,394.4 218.0,394.6 C219.0,394.7 220.2,395.5 221.0,396.2 C221.8,397.0 222.0,398.6 222.6,399.1 C223.2,399.5 224.1,399.1 224.4,399.1" stroke="#2b2b2b" stroke-width="0.75" fill="none" stroke-linejoin="round" stroke-linecap="round" />
<path d="M236.4,400.2 C236.8,400.6 238.4,401.5 238.8,402.4 C239.2,403.4 239.3,404.5 239.0,406.1 C238.7,407.8 237.8,410.5 236.8,412.1 C235.8,413.8 234.5,415.3 232.8,415.9 C231.2,416.4 228.4,415.1 226.9,415.2 C225.4,415.4 224.2,416.3 223.5,417.1 C222.8,417.8 223.7,418.8 222.5,419.9 C221.3,421.1 218.5,423.2 216.1,423.9 C213.7,424.6 209.9,424.6 208.2,424.1 C206.6,423.7 207.4,422.1 206.2,421.4 C205.1,420.8 202.6,420.4 201.3,419.9 C200.0,419.5 199.1,419.5 198.4,418.9 C197.8,418.2 198.4,416.7 197.4,416.1 C196.4,415.4 194.0,415.4 192.5,414.9 C191.0,414.3 187.7,413.1 188.5,412.6 C189.3,412.0 195.1,412.1 197.4,411.4 C199.7,410.8 201.3,410.0 202.3,408.9 C203.3,407.7 203.4,405.2 203.6,404.4" stroke="#2b2b2b" stroke-width="0.75" fill="none" stroke-linejoin="round" stroke-linecap="round" />
<path d="M198.4,415.1 C199.1,414.8 201.0,414.5 202.3,413.6 C203.6,412.6 204.9,410.7 206.2,409.6 C207.5,408.6 208.7,407.8 210.2,407.1 C211.7,406.5 214.3,406.6 215.4,405.9 C216.5,405.1 216.6,403.0 216.8,402.4" stroke="#2b2b2b" stroke-width="0.7" fill="none" stroke-linejoin="round" stroke-linecap="round" />
<path d="M242.6,381.7 A6.2,4.1 0 1 1 253.4,377.1" stroke="#2b2b2b" stroke-width="0.75" fill="none" stroke-linejoin="round" stroke-linecap="round" />
<path d="M263.4,376.3 A6.2,4.1 0 1 0 275.4,377.5" stroke="#2b2b2b" stroke-width="0.75" fill="none" stroke-linejoin="round" stroke-linecap="round" />
<path d="M253.4,377.1 C253.5,376.4 253.4,373.8 254.0,372.9 C254.6,372.0 256.0,371.7 257.0,371.8 C258.0,371.9 259.2,372.8 260.0,373.5 C260.8,374.2 261.0,375.8 261.6,376.3 C262.2,376.8 263.1,376.3 263.4,376.3" stroke="#2b2b2b" stroke-width="0.75" fill="none" stroke-linejoin="round" stroke-linecap="round" />
<path d="M275.4,377.5 C275.8,377.9 277.4,378.7 277.8,379.7 C278.2,380.7 278.3,381.8 278.0,383.4 C277.7,385.0 276.8,387.8 275.8,389.4 C274.8,391.0 273.4,392.6 271.8,393.1 C270.2,393.6 267.5,392.3 265.9,392.5 C264.4,392.7 263.2,393.5 262.5,394.3 C261.8,395.1 262.7,396.1 261.5,397.2 C260.3,398.3 257.5,400.5 255.1,401.2 C252.7,401.9 248.9,401.8 247.2,401.4 C245.6,401.0 246.4,399.4 245.2,398.7 C244.1,398.0 241.6,397.6 240.3,397.2 C239.0,396.8 238.1,396.8 237.4,396.1 C236.8,395.5 237.4,394.0 236.4,393.3 C235.4,392.6 233.0,392.7 231.5,392.1 C230.0,391.5 226.7,390.4 227.5,389.8 C228.3,389.2 234.1,389.3 236.4,388.7 C238.7,388.1 240.3,387.3 241.3,386.1 C242.3,384.9 242.4,382.4 242.6,381.7" stroke="#2b2b2b" stroke-width="0.75" fill="none" stroke-linejoin="round" stroke-linecap="round" />
<path d="M237.4,392.3 C238.1,392.1 240.0,391.7 241.3,390.8 C242.6,389.9 243.9,388.0 245.2,386.9 C246.5,385.8 247.7,385.0 249.2,384.4 C250.7,383.8 253.3,383.9 254.4,383.1 C255.5,382.3 255.6,380.3 255.8,379.7" stroke="#2b2b2b" stroke-width="0.7" fill="none" stroke-linejoin="round" stroke-linecap="round" />
<path d="M281.6,358.9 A6.2,4.1 0 1 1 292.4,354.4" stroke="#2b2b2b" stroke-width="0.75" fill="none" stroke-linejoin="round" stroke-linecap="round" />
<path d="M302.4,353.6 A6.2,4.1 0 1 0 314.4,354.8" stroke="#2b2b2b" stroke-width="0.75" fill="none" stroke-linejoin="round" stroke-linecap="round" />
<path d="M292.4,354.4 C292.5,353.7 292.4,351.0 293.0,350.1 C293.6,349.3 295.0,348.9 296.0,349.1 C297.0,349.2 298.2,350.0 299.0,350.8 C299.8,351.5 300.0,353.1 300.6,353.6 C301.2,354.0 302.1,353.6 302.4,353.6" stroke="#2b2b2b" stroke-width="0.75" fill="none" stroke-linejoin="round" stroke-linecap="round" />
<path d="M314.4,354.8 C314.8,355.1 316.4,356.0 316.8,356.9 C317.2,357.9 317.3,359.0 317.0,360.6 C316.7,362.3 315.8,365.0 314.8,366.6 C313.8,368.3 312.5,369.8 310.8,370.4 C309.1,370.9 306.4,369.6 304.9,369.8 C303.3,369.9 302.2,370.8 301.5,371.6 C300.8,372.3 301.7,373.3 300.5,374.4 C299.3,375.6 296.5,377.8 294.1,378.4 C291.7,379.1 287.8,379.1 286.2,378.6 C284.6,378.2 285.3,376.6 284.2,375.9 C283.1,375.2 280.6,374.9 279.3,374.4 C278.0,374.0 277.0,374.0 276.4,373.4 C275.8,372.7 276.4,371.2 275.4,370.6 C274.4,369.9 272.0,369.9 270.5,369.4 C269.0,368.8 265.7,367.6 266.5,367.1 C267.3,366.5 273.1,366.6 275.4,365.9 C277.7,365.3 279.3,364.5 280.3,363.4 C281.3,362.2 281.4,359.7 281.6,358.9" stroke="#2b2b2b" stroke-width="0.75" fill="none" stroke-linejoin="round" stroke-linecap="round" />
<path d="M276.4,369.6 C277.0,369.3 279.0,369.0 280.3,368.1 C281.6,367.1 282.9,365.2 284.2,364.1 C285.5,363.1 286.7,362.3 288.2,361.6 C289.7,361.0 292.3,361.1 293.4,360.4 C294.5,359.6 294.6,357.5 294.8,356.9" stroke="#2b2b2b" stroke-width="0.7" fill="none" stroke-linejoin="round" stroke-linecap="round" />
</g>
<ellipse cx="168.4" cy="464.2" rx="3.2" ry="2.0" stroke="#2b2b2b" stroke-width="0.8" fill="#fff" />
<path d="M165.8,464.8 a2.6,1.5 0 0 0 5.2,0" stroke="#2b2b2b" stroke-width="0.6" fill="none" stroke-linejoin="round" stroke-linecap="round" />
<ellipse cx="250.0" cy="331.8" rx="5.6" ry="3.3" stroke="#2b2b2b" stroke-width="0.9" fill="#fff" />
<path d="M245.4,332.6 a4.8,2.6 0 0 0 9.2,0" stroke="#2b2b2b" stroke-width="0.6" fill="none" stroke-linejoin="round" stroke-linecap="round" />
<path d="M172.0,641.5 L173.5,637.5 L186.0,631.5 L196.0,633.5 L201.0,630.4 L210.0,623.0 L212.4,618.6 L217.5,616.8 L220.0,619.2 L249.0,602.4 L250.6,597.0 L255.6,595.4 L258.6,597.6 L288.0,580.4 L289.6,575.2 L294.6,573.6 L297.4,575.8 L316.0,565.0 L318.6,561.2 L321.6,561.8 L322.0,563.0 L338.0,553.6 L342.0,552.8 L346.4,554.4 L397.4,583.6 L400.6,587.2 L399.6,591.2 L386.0,599.0 L385.0,602.8 L381.6,604.4 L378.6,603.2 L258.0,673.4 L250.0,677.2 L238.0,678.4 L230.0,677.4 L176.0,647.4 L172.4,644.6Z" stroke="#2b2b2b" stroke-width="1.0" fill="#fff" stroke-linejoin="round" stroke-linecap="round" />
<ellipse cx="227.2" cy="648.3" rx="24.6" ry="14.4" stroke="#2b2b2b" stroke-width="1.0" fill="none" />
<ellipse cx="265.7" cy="626.3" rx="24.6" ry="14.4" stroke="#2b2b2b" stroke-width="1.0" fill="none" />
<ellipse cx="304.2" cy="604.3" rx="24.6" ry="14.4" stroke="#2b2b2b" stroke-width="1.0" fill="none" />
<ellipse cx="342.7" cy="582.3" rx="24.6" ry="14.4" stroke="#2b2b2b" stroke-width="1.0" fill="none" />
<g transform="rotate(-30 187.5 640)">
<rect x="179" y="637.2" width="17.5" height="5.6" rx="2.8" fill="none" stroke="#2b2b2b" stroke-width="0.9"/>
</g>
<ellipse cx="191.5" cy="650.0" rx="3.4" ry="2.2" stroke="#2b2b2b" stroke-width="0.9" fill="none" />
<ellipse cx="225.0" cy="670.4" rx="4.2" ry="2.6" stroke="#2b2b2b" stroke-width="0.9" fill="none" />
<ellipse cx="249.0" cy="670.8" rx="4.8" ry="3.0" stroke="#2b2b2b" stroke-width="0.9" fill="none" />
<ellipse cx="235.5" cy="667.0" rx="2.2" ry="1.5" stroke="#2b2b2b" stroke-width="0.9" fill="none" />
<ellipse cx="228.6" cy="627.4" rx="4.0" ry="2.5" stroke="#2b2b2b" stroke-width="0.9" fill="none" />
<ellipse cx="214.4" cy="630.4" rx="1.2" ry="0.9" stroke="#2b2b2b" stroke-width="0.7" fill="#444" />
<ellipse cx="238.0" cy="631.6" rx="1.2" ry="0.9" stroke="#2b2b2b" stroke-width="0.7" fill="#444" />
<ellipse cx="267.0" cy="605.4" rx="4.0" ry="2.5" stroke="#2b2b2b" stroke-width="0.9" fill="none" />
<ellipse cx="252.8" cy="608.4" rx="1.2" ry="0.9" stroke="#2b2b2b" stroke-width="0.7" fill="#444" />
<ellipse cx="276.4" cy="609.6" rx="1.2" ry="0.9" stroke="#2b2b2b" stroke-width="0.7" fill="#444" />
<ellipse cx="305.4" cy="582.6" rx="4.0" ry="2.5" stroke="#2b2b2b" stroke-width="0.9" fill="none" />
<ellipse cx="291.2" cy="585.6" rx="1.2" ry="0.9" stroke="#2b2b2b" stroke-width="0.7" fill="#444" />
<ellipse cx="314.8" cy="586.8" rx="1.2" ry="0.9" stroke="#2b2b2b" stroke-width="0.7" fill="#444" />
<ellipse cx="345.6" cy="561.4" rx="3.6" ry="2.3" stroke="#2b2b2b" stroke-width="0.9" fill="none" />
<ellipse cx="333.4" cy="563.6" rx="1.2" ry="0.9" stroke="#2b2b2b" stroke-width="0.7" fill="#444" />
<ellipse cx="310.8" cy="575.8" rx="1.2" ry="0.9" stroke="#2b2b2b" stroke-width="0.7" fill="#444" />
<ellipse cx="379.0" cy="580.4" rx="4.2" ry="2.6" stroke="#2b2b2b" stroke-width="0.9" fill="none" />
<ellipse cx="381.6" cy="594.4" rx="4.8" ry="3.0" stroke="#2b2b2b" stroke-width="0.9" fill="none" />
<ellipse cx="374.6" cy="586.8" rx="1.4" ry="1.0" stroke="#2b2b2b" stroke-width="0.7" fill="#444" />
<ellipse cx="365.0" cy="602.6" rx="4.6" ry="2.9" stroke="#2b2b2b" stroke-width="0.9" fill="none" />
<ellipse cx="350.6" cy="600.2" rx="2.6" ry="1.7" stroke="#2b2b2b" stroke-width="0.9" fill="none" />
<ellipse cx="342.4" cy="603.8" rx="4.0" ry="2.5" stroke="#2b2b2b" stroke-width="0.9" fill="none" />
<ellipse cx="337.0" cy="608.4" rx="2.0" ry="1.4" stroke="#2b2b2b" stroke-width="0.9" fill="none" />
<ellipse cx="333.4" cy="598.8" rx="1.4" ry="1.0" stroke="#2b2b2b" stroke-width="0.7" fill="#444" />
<ellipse cx="342.4" cy="616.8" rx="4.6" ry="2.9" stroke="#2b2b2b" stroke-width="0.9" fill="none" />
<ellipse cx="356.8" cy="611.6" rx="1.2" ry="0.9" stroke="#2b2b2b" stroke-width="0.7" fill="#444" />
<ellipse cx="326.0" cy="626.0" rx="4.6" ry="2.9" stroke="#2b2b2b" stroke-width="0.9" fill="none" />
<ellipse cx="312.0" cy="622.0" rx="2.6" ry="1.7" stroke="#2b2b2b" stroke-width="0.9" fill="none" />
<ellipse cx="304.0" cy="625.6" rx="4.0" ry="2.5" stroke="#2b2b2b" stroke-width="0.9" fill="none" />
<ellipse cx="298.6" cy="630.4" rx="2.0" ry="1.4" stroke="#2b2b2b" stroke-width="0.9" fill="none" />
<ellipse cx="314.4" cy="631.4" rx="2.0" ry="1.4" stroke="#2b2b2b" stroke-width="0.9" fill="none" />
<ellipse cx="295.0" cy="620.8" rx="1.4" ry="1.0" stroke="#2b2b2b" stroke-width="0.7" fill="#444" />
<ellipse cx="304.0" cy="638.8" rx="4.6" ry="2.9" stroke="#2b2b2b" stroke-width="0.9" fill="none" />
<ellipse cx="318.4" cy="633.6" rx="1.2" ry="0.9" stroke="#2b2b2b" stroke-width="0.7" fill="#444" />
<ellipse cx="287.6" cy="648.0" rx="4.6" ry="2.9" stroke="#2b2b2b" stroke-width="0.9" fill="none" />
<ellipse cx="273.6" cy="644.0" rx="2.6" ry="1.7" stroke="#2b2b2b" stroke-width="0.9" fill="none" />
<ellipse cx="265.6" cy="647.8" rx="4.0" ry="2.5" stroke="#2b2b2b" stroke-width="0.9" fill="none" />
<ellipse cx="260.2" cy="652.6" rx="2.0" ry="1.4" stroke="#2b2b2b" stroke-width="0.9" fill="none" />
<ellipse cx="256.6" cy="643.0" rx="1.4" ry="1.0" stroke="#2b2b2b" stroke-width="0.7" fill="#444" />
<ellipse cx="265.6" cy="660.8" rx="4.6" ry="2.9" stroke="#2b2b2b" stroke-width="0.9" fill="none" />
<ellipse cx="280.0" cy="656.4" rx="1.2" ry="0.9" stroke="#2b2b2b" stroke-width="0.7" fill="#444" />
<ellipse cx="202.4" cy="623.4" rx="1.2" ry="0.9" stroke="#2b2b2b" stroke-width="0.7" fill="#444" />
<ellipse cx="322.6" cy="560.4" rx="1.4" ry="1.0" stroke="#2b2b2b" stroke-width="0.7" fill="#444" />
<ellipse cx="383.6" cy="603.0" rx="1.4" ry="1.0" stroke="#2b2b2b" stroke-width="0.7" fill="#444" />
<path d="M39.4,263 L39.4,330.5 L117,375.4 L117,420.6" stroke="#5a5a5a" stroke-width="0.8" fill="none" stroke-dasharray="27.2 7.1 55.9 8.3 25.9 11.2 40.7 7.1 19 0" stroke-linejoin="round" stroke-linecap="round" />
<path d="M45.2,359.5 L114.7,397.9" stroke="#5a5a5a" stroke-width="0.8" fill="none" stroke-dasharray="26.5 8.2 36.6 4 6 0" stroke-linejoin="round" stroke-linecap="round" />
<path d="M372.4,278 L372.4,302 L268.4,361 L268.4,376" stroke="#5a5a5a" stroke-width="0.8" fill="none" stroke-dasharray="41.6 11.9 22 12.1 21.2 15.9 40 0" stroke-linejoin="round" stroke-linecap="round" />
<path d="M239.5,182 L239.5,378" stroke="#5a5a5a" stroke-width="0.8" fill="none" stroke-dasharray="29 3.5 20 3.5 36 3.5 14 3.5" stroke-linejoin="round" stroke-linecap="round" />
<line x1="250.4" y1="300" x2="250.4" y2="331" stroke="#5a5a5a" stroke-width="0.8" />
<line x1="71" y1="401.5" x2="89.5" y2="410.5" stroke="#5a5a5a" stroke-width="0.8" />
<line x1="86" y1="474" x2="120.5" y2="456" stroke="#5a5a5a" stroke-width="0.8" />
<rect x="222" y="189.7" width="12" height="9" fill="#ffff00"/>
<text x="228.0" y="197.2" font-size="7.8" fill="#1c1c1c" text-anchor="middle" >24</text>
<rect x="222" y="200.2" width="12" height="9" fill="#ffff00"/>
<text x="228.0" y="207.7" font-size="7.8" fill="#1c1c1c" text-anchor="middle" >23</text>
<rect x="222" y="213.2" width="12" height="9" fill="#ffff00"/>
<text x="228.0" y="220.7" font-size="7.8" fill="#1c1c1c" text-anchor="middle" >22</text>
<rect x="222" y="235.6" width="12" height="9" fill="#ffff00"/>
<text x="228.0" y="243.1" font-size="7.8" fill="#1c1c1c" text-anchor="middle" >21</text>
<rect x="222" y="261.3" width="12" height="9" fill="#ffff00"/>
<text x="228.0" y="268.8" font-size="7.8" fill="#1c1c1c" text-anchor="middle" >20</text>
<rect x="222" y="274.4" width="12" height="9" fill="#ffff00"/>
<text x="228.0" y="281.9" font-size="7.8" fill="#1c1c1c" text-anchor="middle" >19</text>
<rect x="107.0" y="233.4" width="10.2" height="8.5" fill="#ffff00"/>
<text x="112.1" y="240.4" font-size="7.8" fill="#1c1c1c" text-anchor="middle" >17</text>
<rect x="107.0" y="247.0" width="10.2" height="8.5" fill="#ffff00"/>
<text x="112.1" y="254.0" font-size="7.8" fill="#1c1c1c" text-anchor="middle" >16</text>
<rect x="107.0" y="260.4" width="10.2" height="8.5" fill="#ffff00"/>
<text x="112.1" y="267.4" font-size="7.8" fill="#1c1c1c" text-anchor="middle" >15</text>
<rect x="107.0" y="284.2" width="10.2" height="8.5" fill="#ffff00"/>
<text x="112.1" y="291.2" font-size="7.8" fill="#1c1c1c" text-anchor="middle" >14</text>
<rect x="107.0" y="320.2" width="10.2" height="8.5" fill="#ffff00"/>
<text x="112.1" y="327.2" font-size="7.8" fill="#1c1c1c" text-anchor="middle" >12</text>
<rect x="107.0" y="307.1" width="10.2" height="8.6" fill="#f28484"/>
<text x="112.1" y="314.20000000000005" font-size="7.8" fill="#1c1c1c" text-anchor="middle" >13</text>
<rect x="306" y="281.4" width="8.4" height="8.8" fill="#00e600"/>
<text x="310.2" y="288.7" font-size="7.8" fill="#1c1c1c" text-anchor="middle" >2</text>
<rect x="219.4" y="540" width="10.8" height="9" fill="#ffff00"/>
<text x="224.8" y="547.5" font-size="7.8" fill="#1c1c1c" text-anchor="middle" >18</text>
<rect x="103" y="569" width="10.2" height="9.2" fill="#ffff00"/>
<text x="108.1" y="576.7" font-size="7.8" fill="#1c1c1c" text-anchor="middle" >11</text>
<text x="263.4" y="177" font-size="8" fill="#333" text-anchor="middle" >29</text>
<text x="64" y="207" font-size="8" fill="#333" text-anchor="middle" >26</text>
<text x="407" y="231" font-size="8" fill="#333" text-anchor="middle" >27</text>
<text x="272" y="294" font-size="8" fill="#333" text-anchor="middle" >10</text>
<text x="289" y="316" font-size="8" fill="#333" text-anchor="middle" >3</text>
<text x="215" y="326" font-size="8" fill="#333" text-anchor="middle" >5</text>
<text x="165.5" y="359" font-size="8" fill="#333" text-anchor="middle" >4</text>
<text x="25" y="372" font-size="8" fill="#333" text-anchor="middle" >28</text>
<text x="64" y="421" font-size="8" fill="#333" text-anchor="middle" >9</text>
<text x="64" y="470" font-size="8" fill="#333" text-anchor="middle" >8</text>
<text x="221" y="492.5" font-size="8" fill="#333" text-anchor="middle" >7</text>
<text x="172.5" y="521" font-size="8" fill="#333" text-anchor="middle" >6</text>
<text x="365" y="473" font-size="8" fill="#333" text-anchor="middle" >1</text>
<text x="391" y="558" font-size="8" fill="#333" text-anchor="middle" >25</text>
<line x1="243" y1="178" x2="257" y2="175.5" stroke="#666" stroke-width="0.6" />
<line x1="52.5" y1="212.5" x2="58" y2="209.5" stroke="#666" stroke-width="0.6" />
<line x1="375.6" y1="231.5" x2="399" y2="229" stroke="#666" stroke-width="0.6" />
<line x1="255.5" y1="294" x2="266" y2="291.5" stroke="#666" stroke-width="0.6" />
<line x1="282.5" y1="324" x2="287" y2="317" stroke="#666" stroke-width="0.6" />
<line x1="199" y1="327" x2="210.5" y2="324.5" stroke="#666" stroke-width="0.6" />
<line x1="147" y1="360" x2="160" y2="357.5" stroke="#666" stroke-width="0.6" />
<line x1="32" y1="357" x2="27.5" y2="364.5" stroke="#666" stroke-width="0.6" />
<line x1="67" y1="406" x2="65" y2="413" stroke="#666" stroke-width="0.6" />
<line x1="67" y1="469.5" x2="72.3" y2="474.5" stroke="#666" stroke-width="0.6" />
<line x1="206" y1="492.5" x2="216" y2="490.2" stroke="#666" stroke-width="0.6" />
<line x1="154.5" y1="521" x2="167" y2="518.8" stroke="#666" stroke-width="0.6" />
<line x1="352" y1="470" x2="360.5" y2="470" stroke="#666" stroke-width="0.6" />
<line x1="371" y1="567" x2="384.5" y2="556.8" stroke="#666" stroke-width="0.6" />
<line x1="305" y1="291.4" x2="299.3" y2="298" stroke="#666" stroke-width="0.6" />
<line x1="200" y1="194.8" x2="221.5" y2="193.5" stroke="#666" stroke-width="0.6" />
<line x1="199.5" y1="206" x2="221.5" y2="204" stroke="#666" stroke-width="0.6" />
<line x1="204.5" y1="219" x2="221.5" y2="217" stroke="#666" stroke-width="0.6" />
<line x1="202" y1="243" x2="221.5" y2="240" stroke="#666" stroke-width="0.6" />
<line x1="204" y1="268" x2="221.5" y2="265.8" stroke="#666" stroke-width="0.6" />
<line x1="199" y1="281" x2="221.5" y2="279" stroke="#666" stroke-width="0.6" />
<line x1="118.5" y1="238" x2="137.5" y2="240" stroke="#666" stroke-width="0.6" />
<line x1="118.5" y1="251.3" x2="138" y2="254.5" stroke="#666" stroke-width="0.6" />
<line x1="118.5" y1="265" x2="134" y2="267.8" stroke="#666" stroke-width="0.6" />
<line x1="118.5" y1="289" x2="135.5" y2="291.5" stroke="#666" stroke-width="0.6" />
<line x1="118.5" y1="312" x2="134" y2="313.8" stroke="#666" stroke-width="0.6" />
<line x1="118.5" y1="325.3" x2="138.5" y2="327.5" stroke="#666" stroke-width="0.6" />
<line x1="198.6" y1="550" x2="219" y2="545.2" stroke="#666" stroke-width="0.6" />
<line x1="115" y1="575" x2="140.6" y2="580" stroke="#666" stroke-width="0.6" />
<ellipse cx="142.2" cy="238.4" rx="3.7" ry="1.8" stroke="#2b2b2b" stroke-width="0.8" fill="none" />
<path d="M138.5,238.4 V241.8 A3.7,1.8 0 0 0 145.9,241.8 V238.4" stroke="#2b2b2b" stroke-width="0.8" fill="none" stroke-linejoin="round" stroke-linecap="round" />
<ellipse cx="142.0" cy="252.4" rx="2.5" ry="1.3" stroke="#2b2b2b" stroke-width="0.8" fill="none" />
<path d="M139.5,252.4 V256.4 A2.5,1.3 0 0 0 144.5,256.4 V252.4" stroke="#2b2b2b" stroke-width="0.8" fill="none" stroke-linejoin="round" stroke-linecap="round" />
<path d="M144.3,250.70000000000002 q3.5,-1.8 4.2,1.2 v3.6 q-1,1.6 -2.2,0 v-3 q-0.8,-1.2 -2,-0.6" stroke="#2b2b2b" stroke-width="0.9" fill="none" stroke-linejoin="round" stroke-linecap="round" />
<ellipse cx="143.2" cy="266.6" rx="9.2" ry="5.2" stroke="#2b2b2b" stroke-width="0.9" fill="none" />
<ellipse cx="143.2" cy="266.3" rx="5.2" ry="2.9" stroke="#2b2b2b" stroke-width="0.8" fill="none" />
<path d="M134.0,266.6 q1.5,5.5 6.5,6.6 h5.4 q5,-1.1 6.5,-6.6" stroke="#2b2b2b" stroke-width="0.8" fill="none" stroke-linejoin="round" stroke-linecap="round" />
<ellipse cx="144.5" cy="283.3" rx="8.7" ry="3.7" stroke="#2b2b2b" stroke-width="0.8" fill="none" />
<path d="M135.8,283.3 A8.7,3.7 0 0 0 153.2,283.3" stroke="#2b2b2b" stroke-width="0.75" fill="none" stroke-linejoin="round" stroke-linecap="round" />
<path d="M135.8,284.8 A8.7,3.7 0 0 0 153.2,284.8" stroke="#2b2b2b" stroke-width="0.6" fill="none" stroke-linejoin="round" stroke-linecap="round" />
<path d="M135.8,286.0 A8.7,3.7 0 0 0 153.2,286.0" stroke="#2b2b2b" stroke-width="0.75" fill="none" stroke-linejoin="round" stroke-linecap="round" />
<path d="M135.8,287.5 A8.7,3.7 0 0 0 153.2,287.5" stroke="#2b2b2b" stroke-width="0.6" fill="none" stroke-linejoin="round" stroke-linecap="round" />
<path d="M135.8,288.8 A8.7,3.7 0 0 0 153.2,288.8" stroke="#2b2b2b" stroke-width="0.75" fill="none" stroke-linejoin="round" stroke-linecap="round" />
<path d="M135.8,290.3 A8.7,3.7 0 0 0 153.2,290.3" stroke="#2b2b2b" stroke-width="0.6" fill="none" stroke-linejoin="round" stroke-linecap="round" />
<path d="M135.8,291.5 A8.7,3.7 0 0 0 153.2,291.5" stroke="#2b2b2b" stroke-width="0.75" fill="none" stroke-linejoin="round" stroke-linecap="round" />
<path d="M135.8,293.0 A8.7,3.7 0 0 0 153.2,293.0" stroke="#2b2b2b" stroke-width="0.6" fill="none" stroke-linejoin="round" stroke-linecap="round" />
<path d="M135.8,294.2 A8.7,3.7 0 0 0 153.2,294.2" stroke="#2b2b2b" stroke-width="0.75" fill="none" stroke-linejoin="round" stroke-linecap="round" />
<path d="M135.8,295.8 A8.7,3.7 0 0 0 153.2,295.8" stroke="#2b2b2b" stroke-width="0.6" fill="none" stroke-linejoin="round" stroke-linecap="round" />
<path d="M135.8,297.0 A8.7,3.7 0 0 0 153.2,297.0" stroke="#2b2b2b" stroke-width="0.75" fill="none" stroke-linejoin="round" stroke-linecap="round" />
<path d="M135.8,298.5 A8.7,3.7 0 0 0 153.2,298.5" stroke="#2b2b2b" stroke-width="0.6" fill="none" stroke-linejoin="round" stroke-linecap="round" />
<path d="M135.8,299.7 A8.7,3.7 0 0 0 153.2,299.7" stroke="#2b2b2b" stroke-width="0.75" fill="none" stroke-linejoin="round" stroke-linecap="round" />
<ellipse cx="144.5" cy="283.3" rx="6.3" ry="2.6" stroke="#2b2b2b" stroke-width="0.7" fill="none" />
<ellipse cx="143.2" cy="313.0" rx="9.2" ry="5.0" stroke="#2b2b2b" stroke-width="1.0" fill="none" />
<ellipse cx="143.2" cy="313.0" rx="5.6" ry="2.9" stroke="#2b2b2b" stroke-width="0.9" fill="none" />
<ellipse cx="143.2" cy="313.4" rx="3.6" ry="1.8" stroke="#2b2b2b" stroke-width="0.6" fill="none" />
<path d="M134.0,313 v1.2 a9.2,5 0 0 0 18.4,0 v-1.2" stroke="#2b2b2b" stroke-width="0.8" fill="none" stroke-linejoin="round" stroke-linecap="round" />
<ellipse cx="142.7" cy="325.4" rx="3.6" ry="1.9" stroke="#2b2b2b" stroke-width="0.9" fill="none" />
<ellipse cx="142.7" cy="325.4" rx="2.1" ry="1.0" stroke="#2b2b2b" stroke-width="0.7" fill="#666" />
<path d="M139.1,325.40000000000003 v1.6 q-1,0.8 -0.4,1.8 v1.8 a4,2.1 0 0 0 8,0 v-1.8 q0.6,-1 -0.4,-1.8 v-1.6" stroke="#2b2b2b" stroke-width="0.9" fill="none" stroke-linejoin="round" stroke-linecap="round" />
<path d="M138.7,328.90000000000003 a4,2 0 0 0 8,0" stroke="#2b2b2b" stroke-width="0.7" fill="none" stroke-linejoin="round" stroke-linecap="round" />
<ellipse cx="194.5" cy="193.8" rx="3.7" ry="1.8" stroke="#2b2b2b" stroke-width="0.8" fill="none" />
<path d="M190.8,193.8 V197.2 A3.7,1.8 0 0 0 198.2,197.2 V193.8" stroke="#2b2b2b" stroke-width="0.8" fill="none" stroke-linejoin="round" stroke-linecap="round" />
<ellipse cx="193.2" cy="206.4" rx="2.5" ry="1.3" stroke="#2b2b2b" stroke-width="0.8" fill="none" />
<path d="M190.7,206.4 V210.4 A2.5,1.3 0 0 0 195.7,210.4 V206.4" stroke="#2b2b2b" stroke-width="0.8" fill="none" stroke-linejoin="round" stroke-linecap="round" />
<path d="M195.5,204.70000000000002 q3.5,-1.8 4.2,1.2 v3.6 q-1,1.6 -2.2,0 v-3 q-0.8,-1.2 -2,-0.6" stroke="#2b2b2b" stroke-width="0.9" fill="none" stroke-linejoin="round" stroke-linecap="round" />
<ellipse cx="195.0" cy="219.4" rx="9.2" ry="5.2" stroke="#2b2b2b" stroke-width="0.9" fill="none" />
<ellipse cx="195.0" cy="219.1" rx="5.2" ry="2.9" stroke="#2b2b2b" stroke-width="0.8" fill="none" />
<path d="M185.8,219.4 q1.5,5.5 6.5,6.6 h5.4 q5,-1.1 6.5,-6.6" stroke="#2b2b2b" stroke-width="0.8" fill="none" stroke-linejoin="round" stroke-linecap="round" />
<ellipse cx="191.9" cy="234.9" rx="9.2" ry="3.9" stroke="#2b2b2b" stroke-width="0.8" fill="none" />
<path d="M182.7,234.9 A9.2,3.9 0 0 0 201.1,234.9" stroke="#2b2b2b" stroke-width="0.75" fill="none" stroke-linejoin="round" stroke-linecap="round" />
<path d="M182.7,236.4 A9.2,3.9 0 0 0 201.1,236.4" stroke="#2b2b2b" stroke-width="0.6" fill="none" stroke-linejoin="round" stroke-linecap="round" />
<path d="M182.7,237.6 A9.2,3.9 0 0 0 201.1,237.6" stroke="#2b2b2b" stroke-width="0.75" fill="none" stroke-linejoin="round" stroke-linecap="round" />
<path d="M182.7,239.2 A9.2,3.9 0 0 0 201.1,239.2" stroke="#2b2b2b" stroke-width="0.6" fill="none" stroke-linejoin="round" stroke-linecap="round" />
<path d="M182.7,240.4 A9.2,3.9 0 0 0 201.1,240.4" stroke="#2b2b2b" stroke-width="0.75" fill="none" stroke-linejoin="round" stroke-linecap="round" />
<path d="M182.7,241.9 A9.2,3.9 0 0 0 201.1,241.9" stroke="#2b2b2b" stroke-width="0.6" fill="none" stroke-linejoin="round" stroke-linecap="round" />
<path d="M182.7,243.2 A9.2,3.9 0 0 0 201.1,243.2" stroke="#2b2b2b" stroke-width="0.75" fill="none" stroke-linejoin="round" stroke-linecap="round" />
<path d="M182.7,244.7 A9.2,3.9 0 0 0 201.1,244.7" stroke="#2b2b2b" stroke-width="0.6" fill="none" stroke-linejoin="round" stroke-linecap="round" />
<path d="M182.7,246.0 A9.2,3.9 0 0 0 201.1,246.0" stroke="#2b2b2b" stroke-width="0.75" fill="none" stroke-linejoin="round" stroke-linecap="round" />
<path d="M182.7,247.5 A9.2,3.9 0 0 0 201.1,247.5" stroke="#2b2b2b" stroke-width="0.6" fill="none" stroke-linejoin="round" stroke-linecap="round" />
<path d="M182.7,248.8 A9.2,3.9 0 0 0 201.1,248.8" stroke="#2b2b2b" stroke-width="0.75" fill="none" stroke-linejoin="round" stroke-linecap="round" />
<path d="M182.7,250.3 A9.2,3.9 0 0 0 201.1,250.3" stroke="#2b2b2b" stroke-width="0.6" fill="none" stroke-linejoin="round" stroke-linecap="round" />
<path d="M182.7,251.5 A9.2,3.9 0 0 0 201.1,251.5" stroke="#2b2b2b" stroke-width="0.75" fill="none" stroke-linejoin="round" stroke-linecap="round" />
<ellipse cx="191.9" cy="234.9" rx="6.6" ry="2.7" stroke="#2b2b2b" stroke-width="0.7" fill="none" />
<ellipse cx="194.5" cy="267.6" rx="9.2" ry="5.0" stroke="#2b2b2b" stroke-width="1.0" fill="none" />
<ellipse cx="194.5" cy="267.6" rx="5.6" ry="2.9" stroke="#2b2b2b" stroke-width="0.9" fill="none" />
<ellipse cx="194.5" cy="268.0" rx="3.6" ry="1.8" stroke="#2b2b2b" stroke-width="0.6" fill="none" />
<path d="M185.3,267.6 v1.2 a9.2,5 0 0 0 18.4,0 v-1.2" stroke="#2b2b2b" stroke-width="0.8" fill="none" stroke-linejoin="round" stroke-linecap="round" />
<ellipse cx="194.5" cy="279.6" rx="3.6" ry="1.9" stroke="#2b2b2b" stroke-width="0.9" fill="none" />
<ellipse cx="194.5" cy="279.6" rx="2.1" ry="1.0" stroke="#2b2b2b" stroke-width="0.7" fill="#666" />
<path d="M190.9,279.6 v1.6 q-1,0.8 -0.4,1.8 v1.8 a4,2.1 0 0 0 8,0 v-1.8 q0.6,-1 -0.4,-1.8 v-1.6" stroke="#2b2b2b" stroke-width="0.9" fill="none" stroke-linejoin="round" stroke-linecap="round" />
<path d="M190.5,283.1 a4,2 0 0 0 8,0" stroke="#2b2b2b" stroke-width="0.7" fill="none" stroke-linejoin="round" stroke-linecap="round" />
<ellipse cx="239.2" cy="174.6" rx="2.9" ry="1.4" stroke="#2b2b2b" stroke-width="0.8" fill="none" />
<path d="M236.3,174.6 V179.6 A2.9,1.4 0 0 0 242.1,179.6 V174.6" stroke="#2b2b2b" stroke-width="0.8" fill="none" stroke-linejoin="round" stroke-linecap="round" />
<ellipse cx="250.0" cy="294.2" rx="4.7" ry="2.2" stroke="#2b2b2b" stroke-width="0.8" fill="none" />
<path d="M245.3,294.2 V296.8 A4.7,2.2 0 0 0 254.7,296.8 V294.2" stroke="#2b2b2b" stroke-width="0.8" fill="none" stroke-linejoin="round" stroke-linecap="round" />
<path d="M245.3,296 a4.7,2.2 0 0 0 9.4,0" stroke="#2b2b2b" stroke-width="0.7" fill="none" stroke-linejoin="round" stroke-linecap="round" />
<ellipse cx="195.1" cy="314.6" rx="3.8" ry="2.0" stroke="#2b2b2b" stroke-width="0.9" fill="none" />
<ellipse cx="195.1" cy="314.6" rx="2.4" ry="1.1" stroke="#2b2b2b" stroke-width="0.7" fill="none" />
<path d="M191.29999999999998,314.6 V337.6 A3.8,2 0 0 0 198.9,337.6 V314.6" stroke="#2b2b2b" stroke-width="0.9" fill="none" stroke-linejoin="round" stroke-linecap="round" />
<path d="M191.29999999999998,317.6 a3.8,2 0 0 0 7.6,0" stroke="#2b2b2b" stroke-width="0.6" fill="none" stroke-linejoin="round" stroke-linecap="round" />
<line x1="193.79999999999998" y1="318.6" x2="193.79999999999998" y2="336.6" stroke="#888" stroke-width="0.5" />
<ellipse cx="142.9" cy="347.0" rx="3.8" ry="2.0" stroke="#2b2b2b" stroke-width="0.9" fill="none" />
<ellipse cx="142.9" cy="347.0" rx="2.4" ry="1.1" stroke="#2b2b2b" stroke-width="0.7" fill="none" />
<path d="M139.1,347 V370.6 A3.8,2 0 0 0 146.70000000000002,370.6 V347" stroke="#2b2b2b" stroke-width="0.9" fill="none" stroke-linejoin="round" stroke-linecap="round" />
<path d="M139.1,350 a3.8,2 0 0 0 7.6,0" stroke="#2b2b2b" stroke-width="0.6" fill="none" stroke-linejoin="round" stroke-linecap="round" />
<line x1="141.6" y1="351" x2="141.6" y2="369.6" stroke="#888" stroke-width="0.5" />
<ellipse cx="143.2" cy="526.6" rx="11.4" ry="6.3" stroke="#2b2b2b" stroke-width="1.0" fill="none" />
<ellipse cx="143.2" cy="526.9" rx="9.8" ry="5.1" stroke="#2b2b2b" stroke-width="0.8" fill="none" />
<path d="M131.79999999999998,526.6 v2.6 a11.4,6.3 0 0 0 22.8,0 v-2.6" stroke="#2b2b2b" stroke-width="0.9" fill="none" stroke-linejoin="round" stroke-linecap="round" />
<ellipse cx="195.4" cy="493.6" rx="10.6" ry="5.9" stroke="#2b2b2b" stroke-width="1.0" fill="none" />
<ellipse cx="195.4" cy="493.9" rx="9.0" ry="4.7" stroke="#2b2b2b" stroke-width="0.8" fill="none" />
<path d="M184.8,493.6 v2.6 a10.6,5.9 0 0 0 21.2,0 v-2.6" stroke="#2b2b2b" stroke-width="0.9" fill="none" stroke-linejoin="round" stroke-linecap="round" />
<g transform="rotate(-28 68 400.5)">
<ellipse cx="68.0" cy="400.5" rx="4.6" ry="5.6" stroke="#2b2b2b" stroke-width="0.9" fill="none" />
<ellipse cx="69.6" cy="400.7" rx="4.4" ry="5.4" stroke="#2b2b2b" stroke-width="0.8" fill="none" />
</g>
<g transform="rotate(-28 79 479)">
<ellipse cx="77.0" cy="479.0" rx="5.6" ry="6.6" stroke="#2b2b2b" stroke-width="1.0" fill="none" />
<ellipse cx="77.6" cy="479.0" rx="4.2" ry="5.2" stroke="#2b2b2b" stroke-width="0.7" fill="none" />
<path d="M77,472.4 h4.2 a5.6,6.6 0 0 1 0,13.2 h-4.2" stroke="#2b2b2b" stroke-width="0.9" fill="none" stroke-linejoin="round" stroke-linecap="round" />
</g>
<ellipse cx="142.9" cy="557.4" rx="1.7" ry="0.9" stroke="#2b2b2b" stroke-width="0.7" fill="none" />
<path d="M141.20000000000002,557.4000000000001 V605 Q140.70000000000002,608.8 133.4,609.8" stroke="#2b2b2b" stroke-width="0.8" fill="none" stroke-linejoin="round" stroke-linecap="round" />
<path d="M144.6,557.4000000000001 V605 Q145.1,608.8 152.4,609.8" stroke="#2b2b2b" stroke-width="0.8" fill="none" stroke-linejoin="round" stroke-linecap="round" />
<path d="M141.20000000000002,559.4000000000001 a1.7,0.9 0 0 0 3.4,0" stroke="#2b2b2b" stroke-width="0.6" fill="none" stroke-linejoin="round" stroke-linecap="round" />
<ellipse cx="142.9" cy="611.6" rx="11.0" ry="5.6" stroke="#2b2b2b" stroke-width="0.9" fill="none" />
<path d="M132.4,613 a10.4,5.0 0 0 0 21,0" stroke="#2b2b2b" stroke-width="0.6" fill="none" stroke-linejoin="round" stroke-linecap="round" />
<ellipse cx="195.0" cy="527.6" rx="1.7" ry="0.9" stroke="#2b2b2b" stroke-width="0.7" fill="none" />
<path d="M193.3,527.6 V576.4 Q192.8,580.1999999999999 186.5,581.1999999999999" stroke="#2b2b2b" stroke-width="0.8" fill="none" stroke-linejoin="round" stroke-linecap="round" />
<path d="M196.7,527.6 V576.4 Q197.2,580.1999999999999 203.5,581.1999999999999" stroke="#2b2b2b" stroke-width="0.8" fill="none" stroke-linejoin="round" stroke-linecap="round" />
<path d="M193.3,529.6 a1.7,0.9 0 0 0 3.4,0" stroke="#2b2b2b" stroke-width="0.6" fill="none" stroke-linejoin="round" stroke-linecap="round" />
<ellipse cx="195.0" cy="583.0" rx="10.0" ry="5.2" stroke="#2b2b2b" stroke-width="0.9" fill="none" />
<path d="M185.5,584.4 a9.4,4.6000000000000005 0 0 0 19,0" stroke="#2b2b2b" stroke-width="0.6" fill="none" stroke-linejoin="round" stroke-linecap="round" />
<g transform="rotate(29.5 25.4 348.2)">
<path d="M25.6,346.5 h22 v3.5 h-22 a0.9,1.75 0 0 1 0,-3.5Z" stroke="#2b2b2b" stroke-width="0.8" fill="#fff" stroke-linejoin="round" stroke-linecap="round" />
<line x1="26.6" y1="346.5" x2="27.2" y2="350" stroke="#333" stroke-width="0.7" />
<line x1="27.900000000000002" y1="346.5" x2="28.5" y2="350" stroke="#333" stroke-width="0.7" />
<line x1="29.200000000000003" y1="346.5" x2="29.8" y2="350" stroke="#333" stroke-width="0.7" />
<line x1="30.5" y1="346.5" x2="31.1" y2="350" stroke="#333" stroke-width="0.7" />
<line x1="31.8" y1="346.5" x2="32.4" y2="350" stroke="#333" stroke-width="0.7" />
<line x1="33.1" y1="346.5" x2="33.7" y2="350" stroke="#333" stroke-width="0.7" />
<line x1="38.4" y1="346.5" x2="39.0" y2="350" stroke="#333" stroke-width="0.7" />
<line x1="39.699999999999996" y1="346.5" x2="40.3" y2="350" stroke="#333" stroke-width="0.7" />
<line x1="41.0" y1="346.5" x2="41.6" y2="350" stroke="#333" stroke-width="0.7" />
<line x1="42.3" y1="346.5" x2="42.9" y2="350" stroke="#333" stroke-width="0.7" />
<line x1="43.6" y1="346.5" x2="44.2" y2="350" stroke="#333" stroke-width="0.7" />
<line x1="44.9" y1="346.5" x2="45.5" y2="350" stroke="#333" stroke-width="0.7" />
<line x1="46.2" y1="346.5" x2="46.8" y2="350" stroke="#333" stroke-width="0.7" />
</g>
<path d="M36.4,231 V262.4 a3,1.2 0 0 0 6,0 V231" stroke="#2b2b2b" stroke-width="0.9" fill="none" stroke-linejoin="round" stroke-linecap="round" />
<path d="M36.4,233.5 q3,1.6 6,0" stroke="#2b2b2b" stroke-width="0.6" fill="none" stroke-linejoin="round" stroke-linecap="round" />
<path d="M36.4,236.2 q3,1.6 6,0" stroke="#2b2b2b" stroke-width="0.6" fill="none" stroke-linejoin="round" stroke-linecap="round" />
<path d="M36.4,238.9 q3,1.6 6,0" stroke="#2b2b2b" stroke-width="0.6" fill="none" stroke-linejoin="round" stroke-linecap="round" />
<path d="M36.4,241.6 q3,1.6 6,0" stroke="#2b2b2b" stroke-width="0.6" fill="none" stroke-linejoin="round" stroke-linecap="round" />
<path d="M36.4,244.3 q3,1.6 6,0" stroke="#2b2b2b" stroke-width="0.6" fill="none" stroke-linejoin="round" stroke-linecap="round" />
<path d="M36.4,247.0 q3,1.6 6,0" stroke="#2b2b2b" stroke-width="0.6" fill="none" stroke-linejoin="round" stroke-linecap="round" />
<path d="M36.4,249.7 q3,1.6 6,0" stroke="#2b2b2b" stroke-width="0.6" fill="none" stroke-linejoin="round" stroke-linecap="round" />
<path d="M36.4,252.4 q3,1.6 6,0" stroke="#2b2b2b" stroke-width="0.6" fill="none" stroke-linejoin="round" stroke-linecap="round" />
<path d="M36.4,255.1 q3,1.6 6,0" stroke="#2b2b2b" stroke-width="0.6" fill="none" stroke-linejoin="round" stroke-linecap="round" />
<path d="M36.4,257.8 q3,1.6 6,0" stroke="#2b2b2b" stroke-width="0.6" fill="none" stroke-linejoin="round" stroke-linecap="round" />
<path d="M36.4,260.5 q3,1.6 6,0" stroke="#2b2b2b" stroke-width="0.6" fill="none" stroke-linejoin="round" stroke-linecap="round" />
<ellipse cx="372.2" cy="206.6" rx="7.2" ry="3.6" stroke="#2b2b2b" stroke-width="0.9" fill="none" />
<path d="M365,206.6 v1.4 a7.2,3.6 0 0 0 14.4,0 v-1.4" stroke="#2b2b2b" stroke-width="0.8" fill="none" stroke-linejoin="round" stroke-linecap="round" />
<path d="M367.6,204.4 V200.6 L370,198.8 H374.6 L376.8,200.6 V204.4" stroke="#2b2b2b" stroke-width="0.9" fill="none" stroke-linejoin="round" stroke-linecap="round" />
<path d="M367.6,200.8 L370.2,202.4 H374.4 L376.8,200.8 M370.2,202.4 V205.4 M374.4,202.4 V205.4" stroke="#2b2b2b" stroke-width="0.7" fill="none" stroke-linejoin="round" stroke-linecap="round" />
<path d="M368.4,210.6 V277.4 a3.8,1.4 0 0 0 7.4,0 V210.6" stroke="#2b2b2b" stroke-width="0.9" fill="none" stroke-linejoin="round" stroke-linecap="round" />
<path d="M368.4,245.0 q3.7,1.6 7.4,0" stroke="#2b2b2b" stroke-width="0.6" fill="none" stroke-linejoin="round" stroke-linecap="round" />
<path d="M368.4,247.8 q3.7,1.6 7.4,0" stroke="#2b2b2b" stroke-width="0.6" fill="none" stroke-linejoin="round" stroke-linecap="round" />
<path d="M368.4,250.6 q3.7,1.6 7.4,0" stroke="#2b2b2b" stroke-width="0.6" fill="none" stroke-linejoin="round" stroke-linecap="round" />
<path d="M368.4,253.4 q3.7,1.6 7.4,0" stroke="#2b2b2b" stroke-width="0.6" fill="none" stroke-linejoin="round" stroke-linecap="round" />
<path d="M368.4,256.2 q3.7,1.6 7.4,0" stroke="#2b2b2b" stroke-width="0.6" fill="none" stroke-linejoin="round" stroke-linecap="round" />
<path d="M368.4,259.0 q3.7,1.6 7.4,0" stroke="#2b2b2b" stroke-width="0.6" fill="none" stroke-linejoin="round" stroke-linecap="round" />
<path d="M368.4,261.8 q3.7,1.6 7.4,0" stroke="#2b2b2b" stroke-width="0.6" fill="none" stroke-linejoin="round" stroke-linecap="round" />
<path d="M368.4,264.6 q3.7,1.6 7.4,0" stroke="#2b2b2b" stroke-width="0.6" fill="none" stroke-linejoin="round" stroke-linecap="round" />
<path d="M368.4,267.4 q3.7,1.6 7.4,0" stroke="#2b2b2b" stroke-width="0.6" fill="none" stroke-linejoin="round" stroke-linecap="round" />
<path d="M368.4,270.2 q3.7,1.6 7.4,0" stroke="#2b2b2b" stroke-width="0.6" fill="none" stroke-linejoin="round" stroke-linecap="round" />
<path d="M368.4,273.0 q3.7,1.6 7.4,0" stroke="#2b2b2b" stroke-width="0.6" fill="none" stroke-linejoin="round" stroke-linecap="round" />
<path d="M368.4,275.8 q3.7,1.6 7.4,0" stroke="#2b2b2b" stroke-width="0.6" fill="none" stroke-linejoin="round" stroke-linecap="round" />
<line x1="370.6" y1="211" x2="370.6" y2="244" stroke="#999" stroke-width="0.5" />
</svg>
<div id="ledge0"></div><div id="ledge1"></div><div id="lw"></div><div id="orb"></div><div id="tick"></div>
<div id="split"></div>
<div id="tool"><div class="in"></div><svg width="48" height="201" viewBox="0 0 48 201" style="position:absolute;left:0;top:0">
<defs><linearGradient id="eg" x1="0" y1="0" x2="1" y2="0"><stop offset="0" stop-color="#e2e2e2"/><stop offset="0.5" stop-color="#c4c4c4"/><stop offset="1" stop-color="#a9a9a9"/></linearGradient>
<linearGradient id="ew" x1="0" y1="0" x2="1" y2="0"><stop offset="0" stop-color="#ffffff"/><stop offset="0.7" stop-color="#e0e0e0"/><stop offset="1" stop-color="#a9a9a9"/></linearGradient></defs>
<!-- coordinates: page x-4, page y-30 -->
<g stroke="#8a8a8a" stroke-width="0.8">
<path d="M17.7,13.8 h12.2 q1,0 1,1 v4.2 l2.3,1.9 l-2.3,1.9 v4.7 q0,1 -1,1 h-12.2 q-1,0 -1,-1 v-12.7 q0,-1 1,-1z" fill="url(#bg)"/>
<path d="M17.7,42 h12.2 q1,0 1,1 v12 q0,1 -1,1 h-12.2 q-1,0 -1,-1 v-4.2 l-2.5,-1.9 l2.5,-1.9 v-4 q0,-1 1,-1z" fill="url(#bg)"/>
<rect x="16.7" y="76.3" width="14.2" height="14.9" rx="1" fill="url(#bg)"/>
<rect x="16.7" y="104.7" width="14.2" height="14.6" rx="1" fill="url(#bg)"/>
</g>
<path d="M18.9,20.9 h10.1 M23.95,16.1 v9.6" stroke="#4c4c4c" stroke-width="2.2" fill="none"/>
<path d="M18.9,48.8 h10.1" stroke="#4c4c4c" stroke-width="2.4" fill="none"/>

<rect x="17.2" y="76.8" width="13.2" height="13.9" fill="#ececec" opacity="0.75"/>
<g fill="#8e8e8e" stroke="#737373" stroke-width="0.8"><rect x="18.4" y="78.4" width="3.2" height="3.2"/><rect x="26.4" y="78.4" width="3.2" height="3.2"/><rect x="18.4" y="86.4" width="3.2" height="3.2"/><rect x="26.4" y="86.4" width="3.2" height="3.2"/></g>
<rect x="20.3" y="108.6" width="7.4" height="7.2" fill="#d6d6d6" stroke="#555" stroke-width="1"/>
<!-- export arrow button -->
<rect x="21.2" y="167.4" width="11.4" height="14.8" fill="url(#eg)"/>
<path d="M21.2,167.4 v14.2 h9.6" stroke="url(#ew)" stroke-width="1.2" fill="none"/>
<path d="M21.2,167.4 v14.2" stroke="#fff" stroke-width="1.2" fill="none"/>
<g fill="#d6d6d6" stroke="#f4f4f4" stroke-width="0.8"><rect x="16" y="167.8" width="3.8" height="3.8"/><rect x="16" y="173" width="3.8" height="3.8"/><rect x="16" y="178.2" width="3.8" height="3.8"/></g>
<path d="M23.2,174.8 h7" stroke="#4a4a4a" stroke-width="1.8" fill="none"/>
<path d="M28.6,172 l3.4,2.8 l-3.4,2.8z" fill="#4a4a4a" stroke="#4a4a4a" stroke-width="0.8" stroke-linejoin="round"/>
</svg>
</div>
<div id="tbl">
<div class="hd" style="left:425px;top:29px;width:743px;height:30px"></div>
<div class="hc" style="left:425px;width:61px"><svg width="20" height="20" viewBox="0 0 20 20" style="position:absolute;left:17px;top:6px"><rect x="1.8" y="2" width="11.8" height="11.6" fill="#fff" stroke="#2b86c5" stroke-width="0.9"/><rect x="1.4" y="1.5" width="12.6" height="1.9" fill="#2b86c5"/><path d="M3,5.6 h1.5 M3,7.6 h1.5 M3,9.6 h1.5 M3,11.6 h1.5" stroke="#5a7da0" stroke-width="0.8"/><path d="M12.6,12.4 L16,15.6" stroke="#3f7fc4" stroke-width="1.9" stroke-linecap="round"/><circle cx="9.6" cy="9.2" r="4.5" fill="#d6dade" stroke="#b9c2cc" stroke-width="0.9"/><path d="M6.9,8.2 h5.4" stroke="#f4f6f8" stroke-width="1.4"/></svg></div>
<div class="hc" style="left:487px;width:74px"><span style="transform:scaleX(1.02)">Symbol(s)</span></div>
<div class="hc" style="left:562px;width:39px"><span style="transform:scaleX(1.0426)">Item</span></div>
<div class="hc" style="left:602px;width:93px"><span style="transform:scaleX(0.9634)">Parts No.</span></div>
<div class="hc" style="left:696px;width:36px"><span style="transform:scaleX(1.02)">Qty.</span></div>
<div class="hc" style="left:733px;width:105px"><span style="transform:scaleX(0.98)">Latest Part No.</span></div>
<div class="hc" style="left:839px;width:126px"><span style="transform:scaleX(1.0356)">Description</span></div>
<div class="hc" style="left:966px;width:59px"><span style="transform:scaleX(1.0021)">Cut Out</span></div>
<div class="hc" style="left:1026px;width:47px"><span style="transform:scaleX(0.9682)">Cut In</span></div>
<div class="hc" style="left:1074px;width:94px"><span style="transform:scaleX(1.029)">Comment</span></div>
<div class="hs" style="left:486px"></div>
<div class="hs" style="left:561px"></div>
<div class="hs" style="left:601px"></div>
<div class="hs" style="left:695px"></div>
<div class="hs" style="left:732px"></div>
<div class="hs" style="left:838px"></div>
<div class="hs" style="left:965px"></div>
<div class="hs" style="left:1025px"></div>
<div class="hs" style="left:1073px"></div>
<div class="rw" style="top:59px">
<svg class="ic" width="62" height="24" viewBox="0 0 62 24"><path d="M12.21,7.75 L13.23,7.78 L13.23,9.22 L12.21,9.25 L11.95,9.89 L12.65,10.63 L11.63,11.65 L10.89,10.95 L10.25,11.21 L10.22,12.23 L8.78,12.23 L8.75,11.21 L8.11,10.95 L7.37,11.65 L6.35,10.63 L7.05,9.89 L6.79,9.25 L5.77,9.22 L5.77,7.78 L6.79,7.75 L7.05,7.11 L6.35,6.37 L7.37,5.35 L8.11,6.05 L8.75,5.79 L8.78,4.77 L10.22,4.77 L10.25,5.79 L10.89,6.05 L11.63,5.35 L12.65,6.37 L11.95,7.11Z" fill="#3a6ae0" stroke="#3a6ae0" stroke-width="0.5" stroke-linejoin="round"/><circle cx="9.5" cy="8.5" r="1.37" fill="#fff"/><path d="M17.71,13.05 L18.73,13.08 L18.73,14.52 L17.71,14.55 L17.45,15.19 L18.15,15.93 L17.13,16.95 L16.39,16.25 L15.75,16.51 L15.72,17.53 L14.28,17.53 L14.25,16.51 L13.61,16.25 L12.87,16.95 L11.85,15.93 L12.55,15.19 L12.29,14.55 L11.27,14.52 L11.27,13.08 L12.29,13.05 L12.55,12.41 L11.85,11.67 L12.87,10.65 L13.61,11.35 L14.25,11.09 L14.28,10.07 L15.72,10.07 L15.75,11.09 L16.39,11.35 L17.13,10.65 L18.15,11.67 L17.45,12.41Z" fill="#7aa82a" stroke="#7aa82a" stroke-width="0.5" stroke-linejoin="round"/><circle cx="15.0" cy="13.8" r="1.37" fill="#fff"/><g fill="none" stroke="#3d6590" stroke-width="1.15" stroke-linecap="round" stroke-linejoin="round"><path d="M22.2,4.5 L24.4,5.3 L26.4,13.6 L35.8,13.6"/><path d="M24.8,6.3 L37.8,6.3 L35.9,11.4 L26,11.4"/><path d="M27.2,15.4 L35.4,15.4"/></g><g stroke="#3d6590" stroke-width="0.8"><path d="M27.6,6.3 V11.4 M29.8,6.3 V11.4 M32,6.3 V11.4 M34.2,6.3 V11.4 M25.4,8.8 H36.8"/></g><circle cx="27.8" cy="16.3" r="1" fill="#3d8be0"/><circle cx="34.8" cy="16.3" r="1" fill="#3d8be0"/><circle cx="47.9" cy="11.0" r="6.9" fill="url(#ig)" stroke="#a9c6de" stroke-width="0.8"/><rect x="46.9" y="9.6" width="2" height="5.4" fill="#3a5f96"/><circle cx="47.9" cy="7.2" r="1.2" fill="#3a5f96"/></svg>
<div class="c c2" style="left:137px;width:39px"><span style="transform:scaleX(0.9085)">2</span></div>
<div class="c c3" style="left:177px;width:93px"><span style="transform:scaleX(0.9085)">T411893</span></div>
<div class="c c4" style="left:271px;width:36px"><span style="transform:scaleX(0.9085)">1</span></div>
<div class="c c5" style="left:308px;width:105px"><span style="transform:scaleX(0.9085)">T411893</span></div>
<div class="c c6" style="left:414px;width:126px"><span style="transform:scaleX(0.8629)">CYLINDER HEAD ASSEMBLY</span></div>
</div>
<div class="rw" style="top:83px">
<svg class="ic" width="62" height="24" viewBox="0 0 62 24"><path d="M15.37,10.81 L16.71,10.86 L16.71,12.74 L15.37,12.79 L15.02,13.62 L15.94,14.60 L14.60,15.94 L13.62,15.02 L12.79,15.37 L12.74,16.71 L10.86,16.71 L10.81,15.37 L9.98,15.02 L9.00,15.94 L7.66,14.60 L8.58,13.62 L8.23,12.79 L6.89,12.74 L6.89,10.86 L8.23,10.81 L8.58,9.98 L7.66,9.00 L9.00,7.66 L9.98,8.58 L10.81,8.23 L10.86,6.89 L12.74,6.89 L12.79,8.23 L13.62,8.58 L14.60,7.66 L15.94,9.00 L15.02,9.98Z" fill="#7aa82a" stroke="#7aa82a" stroke-width="0.5" stroke-linejoin="round"/><circle cx="11.8" cy="11.8" r="1.80" fill="#fff"/><g fill="none" stroke="#3d6590" stroke-width="1.15" stroke-linecap="round" stroke-linejoin="round"><path d="M22.2,4.5 L24.4,5.3 L26.4,13.6 L35.8,13.6"/><path d="M24.8,6.3 L37.8,6.3 L35.9,11.4 L26,11.4"/><path d="M27.2,15.4 L35.4,15.4"/></g><g stroke="#3d6590" stroke-width="0.8"><path d="M27.6,6.3 V11.4 M29.8,6.3 V11.4 M32,6.3 V11.4 M34.2,6.3 V11.4 M25.4,8.8 H36.8"/></g><circle cx="27.8" cy="16.3" r="1" fill="#3d8be0"/><circle cx="34.8" cy="16.3" r="1" fill="#3d8be0"/><circle cx="47.9" cy="11.0" r="6.9" fill="url(#ig)" stroke="#a9c6de" stroke-width="0.8"/><rect x="46.9" y="9.6" width="2" height="5.4" fill="#3a5f96"/><circle cx="47.9" cy="7.2" r="1.2" fill="#3a5f96"/></svg>
<div class="c c2" style="left:137px;width:39px"><span style="transform:scaleX(0.9085)">11</span></div>
<div class="c c3" style="left:177px;width:93px"><span style="transform:scaleX(0.9085)">T411790</span></div>
<div class="c c4" style="left:271px;width:36px"><span style="transform:scaleX(0.9085)">4</span></div>
<div class="c c5" style="left:308px;width:105px"><span style="transform:scaleX(0.9085)">T411790</span></div>
<div class="c c6" style="left:414px;width:126px"><span style="transform:scaleX(0.8911)">INTAKE VALVE</span></div>
</div>
<div class="rw" style="top:107px">
<svg class="ic" width="62" height="24" viewBox="0 0 62 24"><path d="M15.37,10.81 L16.71,10.86 L16.71,12.74 L15.37,12.79 L15.02,13.62 L15.94,14.60 L14.60,15.94 L13.62,15.02 L12.79,15.37 L12.74,16.71 L10.86,16.71 L10.81,15.37 L9.98,15.02 L9.00,15.94 L7.66,14.60 L8.58,13.62 L8.23,12.79 L6.89,12.74 L6.89,10.86 L8.23,10.81 L8.58,9.98 L7.66,9.00 L9.00,7.66 L9.98,8.58 L10.81,8.23 L10.86,6.89 L12.74,6.89 L12.79,8.23 L13.62,8.58 L14.60,7.66 L15.94,9.00 L15.02,9.98Z" fill="#7aa82a" stroke="#7aa82a" stroke-width="0.5" stroke-linejoin="round"/><circle cx="11.8" cy="11.8" r="1.80" fill="#fff"/><g fill="none" stroke="#3d6590" stroke-width="1.15" stroke-linecap="round" stroke-linejoin="round"><path d="M22.2,4.5 L24.4,5.3 L26.4,13.6 L35.8,13.6"/><path d="M24.8,6.3 L37.8,6.3 L35.9,11.4 L26,11.4"/><path d="M27.2,15.4 L35.4,15.4"/></g><g stroke="#3d6590" stroke-width="0.8"><path d="M27.6,6.3 V11.4 M29.8,6.3 V11.4 M32,6.3 V11.4 M34.2,6.3 V11.4 M25.4,8.8 H36.8"/></g><circle cx="27.8" cy="16.3" r="1" fill="#3d8be0"/><circle cx="34.8" cy="16.3" r="1" fill="#3d8be0"/><circle cx="47.9" cy="11.0" r="6.9" fill="url(#ig)" stroke="#a9c6de" stroke-width="0.8"/><rect x="46.9" y="9.6" width="2" height="5.4" fill="#3a5f96"/><circle cx="47.9" cy="7.2" r="1.2" fill="#3a5f96"/></svg>
<div class="c c2" style="left:137px;width:39px"><span style="transform:scaleX(0.9085)">12</span></div>
<div class="c c3" style="left:177px;width:93px"><span style="transform:scaleX(0.9085)">T412675</span></div>
<div class="c c4" style="left:271px;width:36px"><span style="transform:scaleX(0.9085)">4</span></div>
<div class="c c5" style="left:308px;width:105px"><span style="transform:scaleX(0.9085)">T412675</span></div>
<div class="c c6" style="left:414px;width:126px"><span style="transform:scaleX(0.8455)">SEAL - VALVE STEM</span></div>
</div>
<div class="rw sel" style="top:131px">
<svg class="ic" width="62" height="24" viewBox="0 0 62 24"><path d="M15.37,10.81 L16.71,10.86 L16.71,12.74 L15.37,12.79 L15.02,13.62 L15.94,14.60 L14.60,15.94 L13.62,15.02 L12.79,15.37 L12.74,16.71 L10.86,16.71 L10.81,15.37 L9.98,15.02 L9.00,15.94 L7.66,14.60 L8.58,13.62 L8.23,12.79 L6.89,12.74 L6.89,10.86 L8.23,10.81 L8.58,9.98 L7.66,9.00 L9.00,7.66 L9.98,8.58 L10.81,8.23 L10.86,6.89 L12.74,6.89 L12.79,8.23 L13.62,8.58 L14.60,7.66 L15.94,9.00 L15.02,9.98Z" fill="#7aa82a" stroke="#7aa82a" stroke-width="0.5" stroke-linejoin="round"/><circle cx="11.8" cy="11.8" r="1.80" fill="#4f9640"/><g fill="none" stroke="#64788f" stroke-width="1.15" stroke-linecap="round" stroke-linejoin="round"><path d="M22.2,4.5 L24.4,5.3 L26.4,13.6 L35.8,13.6"/><path d="M24.8,6.3 L37.8,6.3 L35.9,11.4 L26,11.4"/><path d="M27.2,15.4 L35.4,15.4"/></g><g stroke="#64788f" stroke-width="0.8"><path d="M27.6,6.3 V11.4 M29.8,6.3 V11.4 M32,6.3 V11.4 M34.2,6.3 V11.4 M25.4,8.8 H36.8"/></g><circle cx="27.8" cy="16.3" r="1" fill="#7d8da0"/><circle cx="34.8" cy="16.3" r="1" fill="#7d8da0"/><circle cx="47.9" cy="11.0" r="6.9" fill="url(#ig)" stroke="#a9c6de" stroke-width="0.8"/><rect x="46.9" y="9.6" width="2" height="5.4" fill="#3a5f96"/><circle cx="47.9" cy="7.2" r="1.2" fill="#3a5f96"/></svg>
<div class="c c2" style="left:137px;width:39px"><span style="transform:scaleX(0.9085)">13</span></div>
<div class="c c3" style="left:177px;width:93px"><span style="transform:scaleX(0.9085)">T411807</span></div>
<div class="c c4" style="left:271px;width:36px"><span style="transform:scaleX(0.9085)">4</span></div>
<div class="c c5" style="left:308px;width:105px"><span style="transform:scaleX(0.9085)">T411807</span></div>
<div class="c c6" style="left:414px;width:126px"><span style="transform:scaleX(0.8201)">VALVE SPRING SEAT</span></div>
</div>
<div class="rw" style="top:155px">
<svg class="ic" width="62" height="24" viewBox="0 0 62 24"><path d="M15.37,10.81 L16.71,10.86 L16.71,12.74 L15.37,12.79 L15.02,13.62 L15.94,14.60 L14.60,15.94 L13.62,15.02 L12.79,15.37 L12.74,16.71 L10.86,16.71 L10.81,15.37 L9.98,15.02 L9.00,15.94 L7.66,14.60 L8.58,13.62 L8.23,12.79 L6.89,12.74 L6.89,10.86 L8.23,10.81 L8.58,9.98 L7.66,9.00 L9.00,7.66 L9.98,8.58 L10.81,8.23 L10.86,6.89 L12.74,6.89 L12.79,8.23 L13.62,8.58 L14.60,7.66 L15.94,9.00 L15.02,9.98Z" fill="#7aa82a" stroke="#7aa82a" stroke-width="0.5" stroke-linejoin="round"/><circle cx="11.8" cy="11.8" r="1.80" fill="#fff"/><g fill="none" stroke="#3d6590" stroke-width="1.15" stroke-linecap="round" stroke-linejoin="round"><path d="M22.2,4.5 L24.4,5.3 L26.4,13.6 L35.8,13.6"/><path d="M24.8,6.3 L37.8,6.3 L35.9,11.4 L26,11.4"/><path d="M27.2,15.4 L35.4,15.4"/></g><g stroke="#3d6590" stroke-width="0.8"><path d="M27.6,6.3 V11.4 M29.8,6.3 V11.4 M32,6.3 V11.4 M34.2,6.3 V11.4 M25.4,8.8 H36.8"/></g><circle cx="27.8" cy="16.3" r="1" fill="#3d8be0"/><circle cx="34.8" cy="16.3" r="1" fill="#3d8be0"/><circle cx="47.9" cy="11.0" r="6.9" fill="url(#ig)" stroke="#a9c6de" stroke-width="0.8"/><rect x="46.9" y="9.6" width="2" height="5.4" fill="#3a5f96"/><circle cx="47.9" cy="7.2" r="1.2" fill="#3a5f96"/></svg>
<div class="c c2" style="left:137px;width:39px"><span style="transform:scaleX(0.9085)">14</span></div>
<div class="c c3" style="left:177px;width:93px"><span style="transform:scaleX(0.9085)">T412673</span></div>
<div class="c c4" style="left:271px;width:36px"><span style="transform:scaleX(0.9085)">4</span></div>
<div class="c c5" style="left:308px;width:105px"><span style="transform:scaleX(0.9085)">T412673</span></div>
<div class="c c6" style="left:414px;width:126px"><span style="transform:scaleX(0.8543)">VALVE SPRING</span></div>
</div>
<div class="rw" style="top:179px">
<svg class="ic" width="62" height="24" viewBox="0 0 62 24"><path d="M15.37,10.81 L16.71,10.86 L16.71,12.74 L15.37,12.79 L15.02,13.62 L15.94,14.60 L14.60,15.94 L13.62,15.02 L12.79,15.37 L12.74,16.71 L10.86,16.71 L10.81,15.37 L9.98,15.02 L9.00,15.94 L7.66,14.60 L8.58,13.62 L8.23,12.79 L6.89,12.74 L6.89,10.86 L8.23,10.81 L8.58,9.98 L7.66,9.00 L9.00,7.66 L9.98,8.58 L10.81,8.23 L10.86,6.89 L12.74,6.89 L12.79,8.23 L13.62,8.58 L14.60,7.66 L15.94,9.00 L15.02,9.98Z" fill="#7aa82a" stroke="#7aa82a" stroke-width="0.5" stroke-linejoin="round"/><circle cx="11.8" cy="11.8" r="1.80" fill="#fff"/><g fill="none" stroke="#3d6590" stroke-width="1.15" stroke-linecap="round" stroke-linejoin="round"><path d="M22.2,4.5 L24.4,5.3 L26.4,13.6 L35.8,13.6"/><path d="M24.8,6.3 L37.8,6.3 L35.9,11.4 L26,11.4"/><path d="M27.2,15.4 L35.4,15.4"/></g><g stroke="#3d6590" stroke-width="0.8"><path d="M27.6,6.3 V11.4 M29.8,6.3 V11.4 M32,6.3 V11.4 M34.2,6.3 V11.4 M25.4,8.8 H36.8"/></g><circle cx="27.8" cy="16.3" r="1" fill="#3d8be0"/><circle cx="34.8" cy="16.3" r="1" fill="#3d8be0"/><circle cx="47.9" cy="11.0" r="6.9" fill="url(#ig)" stroke="#a9c6de" stroke-width="0.8"/><rect x="46.9" y="9.6" width="2" height="5.4" fill="#3a5f96"/><circle cx="47.9" cy="7.2" r="1.2" fill="#3a5f96"/></svg>
<div class="c c2" style="left:137px;width:39px"><span style="transform:scaleX(0.9085)">15</span></div>
<div class="c c3" style="left:177px;width:93px"><span style="transform:scaleX(0.9085)">T411806</span></div>
<div class="c c4" style="left:271px;width:36px"><span style="transform:scaleX(0.9085)">4</span></div>
<div class="c c5" style="left:308px;width:105px"><span style="transform:scaleX(0.9085)">T411806</span></div>
<div class="c c6" style="left:414px;width:126px"><span style="transform:scaleX(0.8608)">VALVE SPRING CAP</span></div>
</div>
<div class="rw" style="top:203px">
<svg class="ic" width="62" height="24" viewBox="0 0 62 24"><path d="M15.37,10.81 L16.71,10.86 L16.71,12.74 L15.37,12.79 L15.02,13.62 L15.94,14.60 L14.60,15.94 L13.62,15.02 L12.79,15.37 L12.74,16.71 L10.86,16.71 L10.81,15.37 L9.98,15.02 L9.00,15.94 L7.66,14.60 L8.58,13.62 L8.23,12.79 L6.89,12.74 L6.89,10.86 L8.23,10.81 L8.58,9.98 L7.66,9.00 L9.00,7.66 L9.98,8.58 L10.81,8.23 L10.86,6.89 L12.74,6.89 L12.79,8.23 L13.62,8.58 L14.60,7.66 L15.94,9.00 L15.02,9.98Z" fill="#7aa82a" stroke="#7aa82a" stroke-width="0.5" stroke-linejoin="round"/><circle cx="11.8" cy="11.8" r="1.80" fill="#fff"/><g fill="none" stroke="#3d6590" stroke-width="1.15" stroke-linecap="round" stroke-linejoin="round"><path d="M22.2,4.5 L24.4,5.3 L26.4,13.6 L35.8,13.6"/><path d="M24.8,6.3 L37.8,6.3 L35.9,11.4 L26,11.4"/><path d="M27.2,15.4 L35.4,15.4"/></g><g stroke="#3d6590" stroke-width="0.8"><path d="M27.6,6.3 V11.4 M29.8,6.3 V11.4 M32,6.3 V11.4 M34.2,6.3 V11.4 M25.4,8.8 H36.8"/></g><circle cx="27.8" cy="16.3" r="1" fill="#3d8be0"/><circle cx="34.8" cy="16.3" r="1" fill="#3d8be0"/><circle cx="47.9" cy="11.0" r="6.9" fill="url(#ig)" stroke="#a9c6de" stroke-width="0.8"/><rect x="46.9" y="9.6" width="2" height="5.4" fill="#3a5f96"/><circle cx="47.9" cy="7.2" r="1.2" fill="#3a5f96"/></svg>
<div class="c c2" style="left:137px;width:39px"><span style="transform:scaleX(0.9085)">16</span></div>
<div class="c c3" style="left:177px;width:93px"><span style="transform:scaleX(0.9085)">T412960</span></div>
<div class="c c4" style="left:271px;width:36px"><span style="transform:scaleX(0.9085)">8</span></div>
<div class="c c5" style="left:308px;width:105px"><span style="transform:scaleX(0.9085)">T412960</span></div>
<div class="c c6" style="left:414px;width:126px"><span style="transform:scaleX(0.8476)">VALVE COLLET</span></div>
</div>
<div class="rw" style="top:227px">
<svg class="ic" width="62" height="24" viewBox="0 0 62 24"><path d="M15.37,10.81 L16.71,10.86 L16.71,12.74 L15.37,12.79 L15.02,13.62 L15.94,14.60 L14.60,15.94 L13.62,15.02 L12.79,15.37 L12.74,16.71 L10.86,16.71 L10.81,15.37 L9.98,15.02 L9.00,15.94 L7.66,14.60 L8.58,13.62 L8.23,12.79 L6.89,12.74 L6.89,10.86 L8.23,10.81 L8.58,9.98 L7.66,9.00 L9.00,7.66 L9.98,8.58 L10.81,8.23 L10.86,6.89 L12.74,6.89 L12.79,8.23 L13.62,8.58 L14.60,7.66 L15.94,9.00 L15.02,9.98Z" fill="#7aa82a" stroke="#7aa82a" stroke-width="0.5" stroke-linejoin="round"/><circle cx="11.8" cy="11.8" r="1.80" fill="#fff"/><g fill="none" stroke="#3d6590" stroke-width="1.15" stroke-linecap="round" stroke-linejoin="round"><path d="M22.2,4.5 L24.4,5.3 L26.4,13.6 L35.8,13.6"/><path d="M24.8,6.3 L37.8,6.3 L35.9,11.4 L26,11.4"/><path d="M27.2,15.4 L35.4,15.4"/></g><g stroke="#3d6590" stroke-width="0.8"><path d="M27.6,6.3 V11.4 M29.8,6.3 V11.4 M32,6.3 V11.4 M34.2,6.3 V11.4 M25.4,8.8 H36.8"/></g><circle cx="27.8" cy="16.3" r="1" fill="#3d8be0"/><circle cx="34.8" cy="16.3" r="1" fill="#3d8be0"/><circle cx="47.9" cy="11.0" r="6.9" fill="url(#ig)" stroke="#a9c6de" stroke-width="0.8"/><rect x="46.9" y="9.6" width="2" height="5.4" fill="#3a5f96"/><circle cx="47.9" cy="7.2" r="1.2" fill="#3a5f96"/></svg>
<div class="c c2" style="left:137px;width:39px"><span style="transform:scaleX(0.9085)">17</span></div>
<div class="c c3" style="left:177px;width:93px"><span style="transform:scaleX(0.9085)">T411797</span></div>
<div class="c c4" style="left:271px;width:36px"><span style="transform:scaleX(0.9085)">4</span></div>
<div class="c c5" style="left:308px;width:105px"><span style="transform:scaleX(0.9085)">T411797</span></div>
<div class="c c6" style="left:414px;width:126px"><span style="transform:scaleX(0.8312)">CAP</span></div>
</div>
<div class="rw" style="top:251px">
<svg class="ic" width="62" height="24" viewBox="0 0 62 24"><path d="M15.37,10.81 L16.71,10.86 L16.71,12.74 L15.37,12.79 L15.02,13.62 L15.94,14.60 L14.60,15.94 L13.62,15.02 L12.79,15.37 L12.74,16.71 L10.86,16.71 L10.81,15.37 L9.98,15.02 L9.00,15.94 L7.66,14.60 L8.58,13.62 L8.23,12.79 L6.89,12.74 L6.89,10.86 L8.23,10.81 L8.58,9.98 L7.66,9.00 L9.00,7.66 L9.98,8.58 L10.81,8.23 L10.86,6.89 L12.74,6.89 L12.79,8.23 L13.62,8.58 L14.60,7.66 L15.94,9.00 L15.02,9.98Z" fill="#7aa82a" stroke="#7aa82a" stroke-width="0.5" stroke-linejoin="round"/><circle cx="11.8" cy="11.8" r="1.80" fill="#fff"/><g fill="none" stroke="#3d6590" stroke-width="1.15" stroke-linecap="round" stroke-linejoin="round"><path d="M22.2,4.5 L24.4,5.3 L26.4,13.6 L35.8,13.6"/><path d="M24.8,6.3 L37.8,6.3 L35.9,11.4 L26,11.4"/><path d="M27.2,15.4 L35.4,15.4"/></g><g stroke="#3d6590" stroke-width="0.8"><path d="M27.6,6.3 V11.4 M29.8,6.3 V11.4 M32,6.3 V11.4 M34.2,6.3 V11.4 M25.4,8.8 H36.8"/></g><circle cx="27.8" cy="16.3" r="1" fill="#3d8be0"/><circle cx="34.8" cy="16.3" r="1" fill="#3d8be0"/><circle cx="47.9" cy="11.0" r="6.9" fill="url(#ig)" stroke="#a9c6de" stroke-width="0.8"/><rect x="46.9" y="9.6" width="2" height="5.4" fill="#3a5f96"/><circle cx="47.9" cy="7.2" r="1.2" fill="#3a5f96"/></svg>
<div class="c c2" style="left:137px;width:39px"><span style="transform:scaleX(0.9085)">18</span></div>
<div class="c c3" style="left:177px;width:93px"><span style="transform:scaleX(0.9085)">T411788</span></div>
<div class="c c4" style="left:271px;width:36px"><span style="transform:scaleX(0.9085)">4</span></div>
<div class="c c5" style="left:308px;width:105px"><span style="transform:scaleX(0.9085)">T411788</span></div>
<div class="c c6" style="left:414px;width:126px"><span style="transform:scaleX(0.8711)">EXHAUST VALVE</span></div>
</div>
<div class="rw" style="top:275px">
<svg class="ic" width="62" height="24" viewBox="0 0 62 24"><path d="M15.37,10.81 L16.71,10.86 L16.71,12.74 L15.37,12.79 L15.02,13.62 L15.94,14.60 L14.60,15.94 L13.62,15.02 L12.79,15.37 L12.74,16.71 L10.86,16.71 L10.81,15.37 L9.98,15.02 L9.00,15.94 L7.66,14.60 L8.58,13.62 L8.23,12.79 L6.89,12.74 L6.89,10.86 L8.23,10.81 L8.58,9.98 L7.66,9.00 L9.00,7.66 L9.98,8.58 L10.81,8.23 L10.86,6.89 L12.74,6.89 L12.79,8.23 L13.62,8.58 L14.60,7.66 L15.94,9.00 L15.02,9.98Z" fill="#7aa82a" stroke="#7aa82a" stroke-width="0.5" stroke-linejoin="round"/><circle cx="11.8" cy="11.8" r="1.80" fill="#fff"/><g fill="none" stroke="#3d6590" stroke-width="1.15" stroke-linecap="round" stroke-linejoin="round"><path d="M22.2,4.5 L24.4,5.3 L26.4,13.6 L35.8,13.6"/><path d="M24.8,6.3 L37.8,6.3 L35.9,11.4 L26,11.4"/><path d="M27.2,15.4 L35.4,15.4"/></g><g stroke="#3d6590" stroke-width="0.8"><path d="M27.6,6.3 V11.4 M29.8,6.3 V11.4 M32,6.3 V11.4 M34.2,6.3 V11.4 M25.4,8.8 H36.8"/></g><circle cx="27.8" cy="16.3" r="1" fill="#3d8be0"/><circle cx="34.8" cy="16.3" r="1" fill="#3d8be0"/><circle cx="47.9" cy="11.0" r="6.9" fill="url(#ig)" stroke="#a9c6de" stroke-width="0.8"/><rect x="46.9" y="9.6" width="2" height="5.4" fill="#3a5f96"/><circle cx="47.9" cy="7.2" r="1.2" fill="#3a5f96"/></svg>
<div class="c c2" style="left:137px;width:39px"><span style="transform:scaleX(0.9085)">19</span></div>
<div class="c c3" style="left:177px;width:93px"><span style="transform:scaleX(0.9085)">T412675</span></div>
<div class="c c4" style="left:271px;width:36px"><span style="transform:scaleX(0.9085)">4</span></div>
<div class="c c5" style="left:308px;width:105px"><span style="transform:scaleX(0.9085)">T412675</span></div>
<div class="c c6" style="left:414px;width:126px"><span style="transform:scaleX(0.8455)">SEAL - VALVE STEM</span></div>
</div>
<div class="rw" style="top:299px">
<svg class="ic" width="62" height="24" viewBox="0 0 62 24"><path d="M15.37,10.81 L16.71,10.86 L16.71,12.74 L15.37,12.79 L15.02,13.62 L15.94,14.60 L14.60,15.94 L13.62,15.02 L12.79,15.37 L12.74,16.71 L10.86,16.71 L10.81,15.37 L9.98,15.02 L9.00,15.94 L7.66,14.60 L8.58,13.62 L8.23,12.79 L6.89,12.74 L6.89,10.86 L8.23,10.81 L8.58,9.98 L7.66,9.00 L9.00,7.66 L9.98,8.58 L10.81,8.23 L10.86,6.89 L12.74,6.89 L12.79,8.23 L13.62,8.58 L14.60,7.66 L15.94,9.00 L15.02,9.98Z" fill="#7aa82a" stroke="#7aa82a" stroke-width="0.5" stroke-linejoin="round"/><circle cx="11.8" cy="11.8" r="1.80" fill="#fff"/><g fill="none" stroke="#3d6590" stroke-width="1.15" stroke-linecap="round" stroke-linejoin="round"><path d="M22.2,4.5 L24.4,5.3 L26.4,13.6 L35.8,13.6"/><path d="M24.8,6.3 L37.8,6.3 L35.9,11.4 L26,11.4"/><path d="M27.2,15.4 L35.4,15.4"/></g><g stroke="#3d6590" stroke-width="0.8"><path d="M27.6,6.3 V11.4 M29.8,6.3 V11.4 M32,6.3 V11.4 M34.2,6.3 V11.4 M25.4,8.8 H36.8"/></g><circle cx="27.8" cy="16.3" r="1" fill="#3d8be0"/><circle cx="34.8" cy="16.3" r="1" fill="#3d8be0"/><circle cx="47.9" cy="11.0" r="6.9" fill="url(#ig)" stroke="#a9c6de" stroke-width="0.8"/><rect x="46.9" y="9.6" width="2" height="5.4" fill="#3a5f96"/><circle cx="47.9" cy="7.2" r="1.2" fill="#3a5f96"/></svg>
<div class="c c2" style="left:137px;width:39px"><span style="transform:scaleX(0.9085)">20</span></div>
<div class="c c3" style="left:177px;width:93px"><span style="transform:scaleX(0.9085)">T411807</span></div>
<div class="c c4" style="left:271px;width:36px"><span style="transform:scaleX(0.9085)">4</span></div>
<div class="c c5" style="left:308px;width:105px"><span style="transform:scaleX(0.9085)">T411807</span></div>
<div class="c c6" style="left:414px;width:126px"><span style="transform:scaleX(0.8201)">VALVE SPRING SEAT</span></div>
</div>
<div class="rw" style="top:323px">
<svg class="ic" width="62" height="24" viewBox="0 0 62 24"><path d="M15.37,10.81 L16.71,10.86 L16.71,12.74 L15.37,12.79 L15.02,13.62 L15.94,14.60 L14.60,15.94 L13.62,15.02 L12.79,15.37 L12.74,16.71 L10.86,16.71 L10.81,15.37 L9.98,15.02 L9.00,15.94 L7.66,14.60 L8.58,13.62 L8.23,12.79 L6.89,12.74 L6.89,10.86 L8.23,10.81 L8.58,9.98 L7.66,9.00 L9.00,7.66 L9.98,8.58 L10.81,8.23 L10.86,6.89 L12.74,6.89 L12.79,8.23 L13.62,8.58 L14.60,7.66 L15.94,9.00 L15.02,9.98Z" fill="#7aa82a" stroke="#7aa82a" stroke-width="0.5" stroke-linejoin="round"/><circle cx="11.8" cy="11.8" r="1.80" fill="#fff"/><g fill="none" stroke="#3d6590" stroke-width="1.15" stroke-linecap="round" stroke-linejoin="round"><path d="M22.2,4.5 L24.4,5.3 L26.4,13.6 L35.8,13.6"/><path d="M24.8,6.3 L37.8,6.3 L35.9,11.4 L26,11.4"/><path d="M27.2,15.4 L35.4,15.4"/></g><g stroke="#3d6590" stroke-width="0.8"><path d="M27.6,6.3 V11.4 M29.8,6.3 V11.4 M32,6.3 V11.4 M34.2,6.3 V11.4 M25.4,8.8 H36.8"/></g><circle cx="27.8" cy="16.3" r="1" fill="#3d8be0"/><circle cx="34.8" cy="16.3" r="1" fill="#3d8be0"/><circle cx="47.9" cy="11.0" r="6.9" fill="url(#ig)" stroke="#a9c6de" stroke-width="0.8"/><rect x="46.9" y="9.6" width="2" height="5.4" fill="#3a5f96"/><circle cx="47.9" cy="7.2" r="1.2" fill="#3a5f96"/></svg>
<div class="c c2" style="left:137px;width:39px"><span style="transform:scaleX(0.9085)">21</span></div>
<div class="c c3" style="left:177px;width:93px"><span style="transform:scaleX(0.9085)">T412673</span></div>
<div class="c c4" style="left:271px;width:36px"><span style="transform:scaleX(0.9085)">4</span></div>
<div class="c c5" style="left:308px;width:105px"><span style="transform:scaleX(0.9085)">T412673</span></div>
<div class="c c6" style="left:414px;width:126px"><span style="transform:scaleX(0.8543)">VALVE SPRING</span></div>
</div>
<div class="rw" style="top:347px">
<svg class="ic" width="62" height="24" viewBox="0 0 62 24"><path d="M15.37,10.81 L16.71,10.86 L16.71,12.74 L15.37,12.79 L15.02,13.62 L15.94,14.60 L14.60,15.94 L13.62,15.02 L12.79,15.37 L12.74,16.71 L10.86,16.71 L10.81,15.37 L9.98,15.02 L9.00,15.94 L7.66,14.60 L8.58,13.62 L8.23,12.79 L6.89,12.74 L6.89,10.86 L8.23,10.81 L8.58,9.98 L7.66,9.00 L9.00,7.66 L9.98,8.58 L10.81,8.23 L10.86,6.89 L12.74,6.89 L12.79,8.23 L13.62,8.58 L14.60,7.66 L15.94,9.00 L15.02,9.98Z" fill="#7aa82a" stroke="#7aa82a" stroke-width="0.5" stroke-linejoin="round"/><circle cx="11.8" cy="11.8" r="1.80" fill="#fff"/><g fill="none" stroke="#3d6590" stroke-width="1.15" stroke-linecap="round" stroke-linejoin="round"><path d="M22.2,4.5 L24.4,5.3 L26.4,13.6 L35.8,13.6"/><path d="M24.8,6.3 L37.8,6.3 L35.9,11.4 L26,11.4"/><path d="M27.2,15.4 L35.4,15.4"/></g><g stroke="#3d6590" stroke-width="0.8"><path d="M27.6,6.3 V11.4 M29.8,6.3 V11.4 M32,6.3 V11.4 M34.2,6.3 V11.4 M25.4,8.8 H36.8"/></g><circle cx="27.8" cy="16.3" r="1" fill="#3d8be0"/><circle cx="34.8" cy="16.3" r="1" fill="#3d8be0"/><circle cx="47.9" cy="11.0" r="6.9" fill="url(#ig)" stroke="#a9c6de" stroke-width="0.8"/><rect x="46.9" y="9.6" width="2" height="5.4" fill="#3a5f96"/><circle cx="47.9" cy="7.2" r="1.2" fill="#3a5f96"/></svg>
<div class="c c2" style="left:137px;width:39px"><span style="transform:scaleX(0.9085)">22</span></div>
<div class="c c3" style="left:177px;width:93px"><span style="transform:scaleX(0.9085)">T411806</span></div>
<div class="c c4" style="left:271px;width:36px"><span style="transform:scaleX(0.9085)">4</span></div>
<div class="c c5" style="left:308px;width:105px"><span style="transform:scaleX(0.9085)">T411806</span></div>
<div class="c c6" style="left:414px;width:126px"><span style="transform:scaleX(0.8608)">VALVE SPRING CAP</span></div>
</div>
<div class="rw" style="top:371px">
<svg class="ic" width="62" height="24" viewBox="0 0 62 24"><path d="M15.37,10.81 L16.71,10.86 L16.71,12.74 L15.37,12.79 L15.02,13.62 L15.94,14.60 L14.60,15.94 L13.62,15.02 L12.79,15.37 L12.74,16.71 L10.86,16.71 L10.81,15.37 L9.98,15.02 L9.00,15.94 L7.66,14.60 L8.58,13.62 L8.23,12.79 L6.89,12.74 L6.89,10.86 L8.23,10.81 L8.58,9.98 L7.66,9.00 L9.00,7.66 L9.98,8.58 L10.81,8.23 L10.86,6.89 L12.74,6.89 L12.79,8.23 L13.62,8.58 L14.60,7.66 L15.94,9.00 L15.02,9.98Z" fill="#7aa82a" stroke="#7aa82a" stroke-width="0.5" stroke-linejoin="round"/><circle cx="11.8" cy="11.8" r="1.80" fill="#fff"/><g fill="none" stroke="#3d6590" stroke-width="1.15" stroke-linecap="round" stroke-linejoin="round"><path d="M22.2,4.5 L24.4,5.3 L26.4,13.6 L35.8,13.6"/><path d="M24.8,6.3 L37.8,6.3 L35.9,11.4 L26,11.4"/><path d="M27.2,15.4 L35.4,15.4"/></g><g stroke="#3d6590" stroke-width="0.8"><path d="M27.6,6.3 V11.4 M29.8,6.3 V11.4 M32,6.3 V11.4 M34.2,6.3 V11.4 M25.4,8.8 H36.8"/></g><circle cx="27.8" cy="16.3" r="1" fill="#3d8be0"/><circle cx="34.8" cy="16.3" r="1" fill="#3d8be0"/><circle cx="47.9" cy="11.0" r="6.9" fill="url(#ig)" stroke="#a9c6de" stroke-width="0.8"/><rect x="46.9" y="9.6" width="2" height="5.4" fill="#3a5f96"/><circle cx="47.9" cy="7.2" r="1.2" fill="#3a5f96"/></svg>
<div class="c c2" style="left:137px;width:39px"><span style="transform:scaleX(0.9085)">23</span></div>
<div class="c c3" style="left:177px;width:93px"><span style="transform:scaleX(0.9085)">T412960</span></div>
<div class="c c4" style="left:271px;width:36px"><span style="transform:scaleX(0.9085)">8</span></div>
<div class="c c5" style="left:308px;width:105px"><span style="transform:scaleX(0.9085)">T412960</span></div>
<div class="c c6" style="left:414px;width:126px"><span style="transform:scaleX(0.8476)">VALVE COLLET</span></div>
</div>
<div class="rw" style="top:395px">
<svg class="ic" width="62" height="24" viewBox="0 0 62 24"><path d="M15.37,10.81 L16.71,10.86 L16.71,12.74 L15.37,12.79 L15.02,13.62 L15.94,14.60 L14.60,15.94 L13.62,15.02 L12.79,15.37 L12.74,16.71 L10.86,16.71 L10.81,15.37 L9.98,15.02 L9.00,15.94 L7.66,14.60 L8.58,13.62 L8.23,12.79 L6.89,12.74 L6.89,10.86 L8.23,10.81 L8.58,9.98 L7.66,9.00 L9.00,7.66 L9.98,8.58 L10.81,8.23 L10.86,6.89 L12.74,6.89 L12.79,8.23 L13.62,8.58 L14.60,7.66 L15.94,9.00 L15.02,9.98Z" fill="#7aa82a" stroke="#7aa82a" stroke-width="0.5" stroke-linejoin="round"/><circle cx="11.8" cy="11.8" r="1.80" fill="#fff"/><g fill="none" stroke="#3d6590" stroke-width="1.15" stroke-linecap="round" stroke-linejoin="round"><path d="M22.2,4.5 L24.4,5.3 L26.4,13.6 L35.8,13.6"/><path d="M24.8,6.3 L37.8,6.3 L35.9,11.4 L26,11.4"/><path d="M27.2,15.4 L35.4,15.4"/></g><g stroke="#3d6590" stroke-width="0.8"><path d="M27.6,6.3 V11.4 M29.8,6.3 V11.4 M32,6.3 V11.4 M34.2,6.3 V11.4 M25.4,8.8 H36.8"/></g><circle cx="27.8" cy="16.3" r="1" fill="#3d8be0"/><circle cx="34.8" cy="16.3" r="1" fill="#3d8be0"/><circle cx="47.9" cy="11.0" r="6.9" fill="url(#ig)" stroke="#a9c6de" stroke-width="0.8"/><rect x="46.9" y="9.6" width="2" height="5.4" fill="#3a5f96"/><circle cx="47.9" cy="7.2" r="1.2" fill="#3a5f96"/></svg>
<div class="c c2" style="left:137px;width:39px"><span style="transform:scaleX(0.9085)">24</span></div>
<div class="c c3" style="left:177px;width:93px"><span style="transform:scaleX(0.9085)">T411797</span></div>
<div class="c c4" style="left:271px;width:36px"><span style="transform:scaleX(0.9085)">4</span></div>
<div class="c c5" style="left:308px;width:105px"><span style="transform:scaleX(0.9085)">T411797</span></div>
<div class="c c6" style="left:414px;width:126px"><span style="transform:scaleX(0.8312)">CAP</span></div>
</div>
<div class="vs" style="left:486px"></div>
<div class="vs" style="left:561px"></div>
<div class="vs" style="left:601px"></div>
<div class="vs" style="left:695px"></div>
<div class="vs" style="left:732px"></div>
<div class="vs" style="left:838px"></div>
<div class="vs" style="left:965px"></div>
<div class="vs" style="left:1025px"></div>
<div class="vs" style="left:1073px"></div>
<div class="vsel" style="left:486px"></div>
<div class="vsel" style="left:561px"></div>
<div class="vsel" style="left:601px"></div>
<div class="vsel" style="left:695px"></div>
<div class="vsel" style="left:732px"></div>
<div class="vsel" style="left:838px"></div>
<div class="vsel" style="left:965px"></div>
<div class="vsel" style="left:1025px"></div>
<div class="vsel" style="left:1073px"></div>
<div class="wmbg"></div><div class="wm">英金狮</div>
</div>
</body></html>
